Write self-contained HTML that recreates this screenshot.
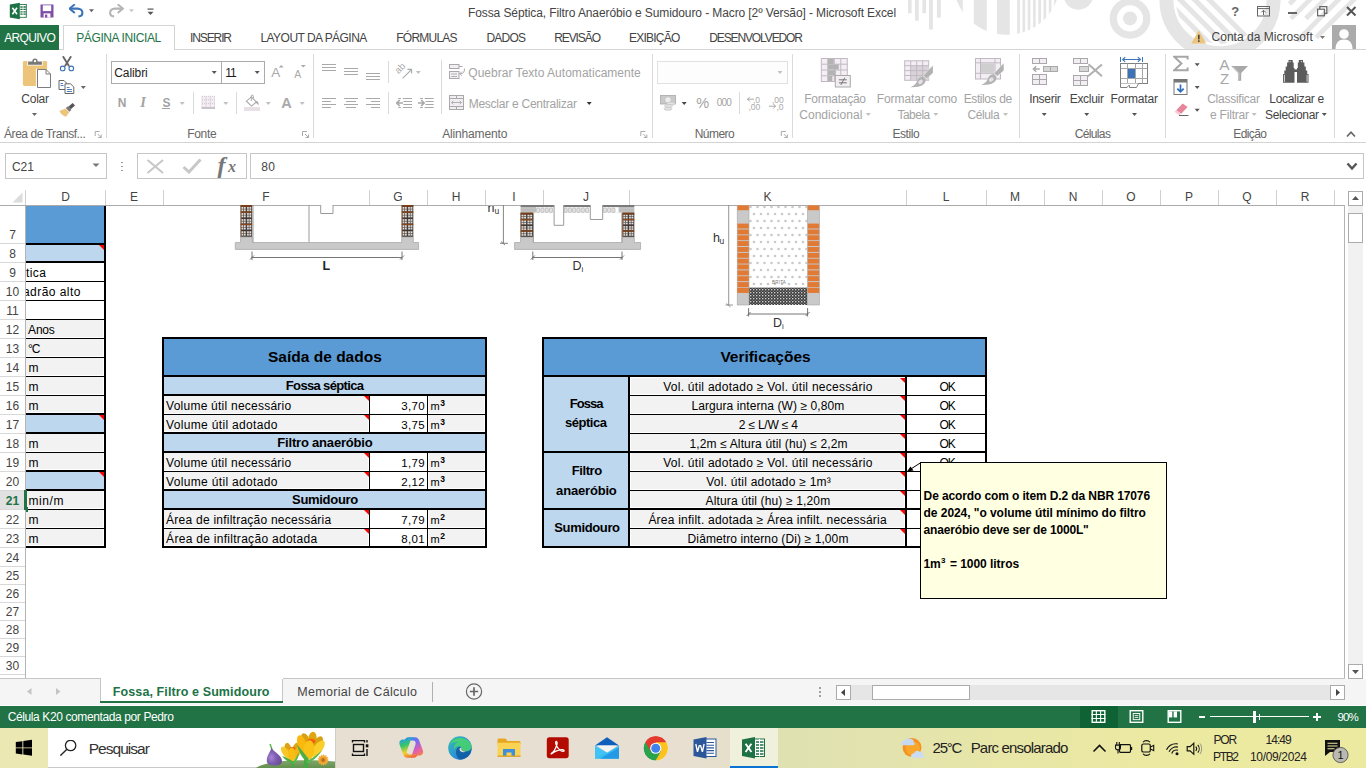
<!DOCTYPE html>
<html><head><meta charset="utf-8"><title>Excel</title><style>
html,body{margin:0;padding:0;background:#fff;}
#r{position:relative;width:1366px;height:768px;overflow:hidden;font-family:"Liberation Sans",sans-serif;background:#fff;}
#r>div,#r>svg,#r>span{position:absolute;}
.t{white-space:pre;line-height:20px;height:20px;}
</style></head><body><div id="r">
<svg style="left:0px;top:0px;" width="1366" height="50">
<g fill="#e5e5e5">
 <rect x="908" y="0" width="3.6" height="13.2"/><rect x="915" y="0" width="3.8" height="20.7"/><rect x="922.4" y="0" width="3.6" height="13.2"/>
 <rect x="929" y="0" width="3.9" height="29.5"/><rect x="936.9" y="0" width="3.9" height="17.6"/>
</g>
<defs>
 <clipPath id="c1"><circle cx="1006.7" cy="-18.7" r="53.5"/></clipPath>
 <clipPath id="c2"><circle cx="1220" cy="-0.4" r="44.3"/></clipPath>
 <clipPath id="c3"><rect x="1283" y="0" width="83" height="49"/></clipPath>
</defs>
<g clip-path="url(#c1)" fill="#e5e5e5">
 <rect x="950" y="0" width="12.8" height="40"/>
 <rect x="973.8" y="0" width="13" height="40"/><rect x="997" y="0" width="12.8" height="40"/>
 <rect x="1017.2" y="0" width="2.7" height="40"/><rect x="1022.5" y="0" width="2.7" height="40"/><rect x="1027.7" y="0" width="2.7" height="40"/><rect x="1033.0" y="0" width="2.7" height="40"/><rect x="1038.3" y="0" width="2.7" height="40"/><rect x="1043.5" y="0" width="2.7" height="40"/><rect x="1048.8" y="0" width="2.7" height="40"/><rect x="1054.1" y="0" width="2.7" height="40"/>
</g>
<circle cx="1078.4" cy="-5.25" r="14.95" fill="#e5e5e5"/>
<circle cx="1130" cy="18.4" r="16.7" fill="none" stroke="#e5e5e5" stroke-width="7.3"/>
<circle cx="1130" cy="18.4" r="7" fill="#e5e5e5"/>
<circle cx="1220" cy="-0.4" r="53.6" fill="none" stroke="#e5e5e5" stroke-width="14"/>
<g clip-path="url(#c2)" stroke="#e5e5e5" stroke-width="5"><line x1="1131.5" y1="-20" x2="1231.5" y2="80"/><line x1="1146" y1="-20" x2="1246" y2="80"/><line x1="1160.5" y1="-20" x2="1260.5" y2="80"/><line x1="1175" y1="-20" x2="1275" y2="80"/><line x1="1189.5" y1="-20" x2="1289.5" y2="80"/></g>
<g stroke="#e5e5e5" stroke-width="4.7"><line x1="1289.5" y1="4" x2="1303.5" y2="-10"/><line x1="1291.0" y1="18.5" x2="1319.5" y2="-10"/><line x1="1305.9" y1="18.5" x2="1334.4" y2="-10"/><line x1="1297.1" y1="41" x2="1348.1" y2="-10"/><line x1="1316.1" y1="37.5" x2="1363.6" y2="-10"/></g>
</svg>
<span class="t" style="left:468px;top:2.84px;font-size:12px;color:#444;letter-spacing:-0.098px;">Fossa Séptica, Filtro Anaeróbio e Sumidouro - Macro [2º Versão] - Microsoft Excel</span>
<div style="left:0px;top:25px;width:59px;height:25px;background:#217346;"></div>
<div style="left:59px;top:49px;width:1307px;height:1px;background:#d4d4d4;"></div>
<div style="left:63px;top:25px;width:112px;height:25px;background:#fff;border:1px solid #d4d4d4;box-sizing:border-box;border-bottom:none;"></div>
<span class="t" style="left:4.2px;top:27.84px;font-size:12px;color:#fff;letter-spacing:-0.621px;">ARQUIVO</span>
<span class="t" style="left:76.2px;top:27.84px;font-size:12px;color:#217346;letter-spacing:-0.381px;">PÁGINA INICIAL</span>
<span class="t" style="left:190.1px;top:27.84px;font-size:12px;color:#444;letter-spacing:-1.127px;">INSERIR</span>
<span class="t" style="left:260.4px;top:27.84px;font-size:12px;color:#444;letter-spacing:-0.534px;">LAYOUT DA PÁGINA</span>
<span class="t" style="left:396.3px;top:27.84px;font-size:12px;color:#444;letter-spacing:-0.773px;">FÓRMULAS</span>
<span class="t" style="left:486.4px;top:27.84px;font-size:12px;color:#444;letter-spacing:-0.738px;">DADOS</span>
<span class="t" style="left:554.2px;top:27.84px;font-size:12px;color:#444;letter-spacing:-1.094px;">REVISÃO</span>
<span class="t" style="left:629px;top:27.84px;font-size:12px;color:#444;letter-spacing:-0.761px;">EXIBIÇÃO</span>
<span class="t" style="left:709.2px;top:27.84px;font-size:12px;color:#444;letter-spacing:-1.111px;">DESENVOLVEDOR</span>
<span class="t" style="left:1211.5px;top:26.84px;font-size:12px;color:#444;letter-spacing:0.032px;">Conta da Microsoft</span>
<div style="left:0px;top:142px;width:1366px;height:1px;background:#d4d4d4;"></div>
<div style="left:106px;top:54px;width:1px;height:84px;background:#dadada;"></div>
<div style="left:313px;top:54px;width:1px;height:84px;background:#dadada;"></div>
<div style="left:652px;top:54px;width:1px;height:84px;background:#dadada;"></div>
<div style="left:792px;top:54px;width:1px;height:84px;background:#dadada;"></div>
<div style="left:1019px;top:54px;width:1px;height:84px;background:#dadada;"></div>
<div style="left:1165px;top:54px;width:1px;height:84px;background:#dadada;"></div>
<div style="left:1334px;top:54px;width:1px;height:84px;background:#dadada;"></div>
<div style="left:193px;top:92px;width:1px;height:22px;background:#dadada;"></div>
<div style="left:236px;top:92px;width:1px;height:22px;background:#dadada;"></div>
<div style="left:388px;top:61px;width:1px;height:22px;background:#dadada;"></div>
<div style="left:388px;top:92px;width:1px;height:22px;background:#dadada;"></div>
<div style="left:441px;top:60px;width:1px;height:54px;background:#dadada;"></div>
<div style="left:739px;top:92px;width:1px;height:22px;background:#dadada;"></div>
<span class="t" style="left:4px;top:123.84px;font-size:12px;color:#666;letter-spacing:-0.436px;">Área de Transf...</span>
<span class="t" style="left:187.3px;top:123.84px;font-size:12px;color:#666;letter-spacing:-0.338px;">Fonte</span>
<span class="t" style="left:442.2px;top:123.84px;font-size:12px;color:#666;letter-spacing:-0.156px;">Alinhamento</span>
<span class="t" style="left:694.7px;top:123.84px;font-size:12px;color:#666;letter-spacing:-0.531px;">Número</span>
<span class="t" style="left:892.5px;top:123.84px;font-size:12px;color:#666;letter-spacing:-0.441px;">Estilo</span>
<span class="t" style="left:1074.7px;top:123.84px;font-size:12px;color:#666;letter-spacing:-0.633px;">Células</span>
<span class="t" style="left:1233.3px;top:123.84px;font-size:12px;color:#666;letter-spacing:-0.617px;">Edição</span>
<span class="t" style="left:21.3px;top:88.84px;font-size:12px;color:#444;letter-spacing:-0.238px;">Colar</span>
<div style="left:111px;top:61px;width:111px;height:23px;background:#fff;border:1px solid #ababab;box-sizing:border-box;"></div>
<div style="left:221px;top:61px;width:44px;height:23px;background:#fff;border:1px solid #ababab;box-sizing:border-box;"></div>
<span class="t" style="left:114.3px;top:62.84px;font-size:12px;color:#1e1e1e;letter-spacing:-0.088px;">Calibri</span>
<span class="t" style="left:225.3px;top:62.84px;font-size:12px;color:#1e1e1e;letter-spacing:-0.984px;">11</span>
<span class="t" style="left:117.7px;top:92.84px;font-size:12px;color:#a3a3a3;font-weight:bold;letter-spacing:-0.172px;">N</span>
<span class="t" style="left:140.2px;top:91.98px;font-size:14.5px;color:#a3a3a3;font-weight:bold;font-style:italic;font-family:'Liberation Serif',serif;letter-spacing:1.144px;">I</span>
<span class="t" style="left:162.4px;top:92.84px;font-size:12px;color:#a3a3a3;font-weight:bold;letter-spacing:-0.616px;">S</span>
<div style="left:162px;top:108px;width:8px;height:1px;background:#a3a3a3;"></div>
<span class="t" style="left:468.3px;top:62.84px;font-size:12px;color:#a3a3a3;letter-spacing:0.022px;">Quebrar Texto Automaticamente</span>
<span class="t" style="left:468.7px;top:93.84px;font-size:12px;color:#a3a3a3;letter-spacing:-0.256px;">Mesclar e Centralizar</span>
<div style="left:657px;top:61px;width:131px;height:23px;background:#fdfdfd;border:1px solid #e1e1e1;box-sizing:border-box;"></div>
<span class="t" style="left:696.3px;top:93.28px;font-size:14.5px;color:#a3a3a3;letter-spacing:-0.506px;">%</span>
<span class="t" style="left:716.7px;top:92.53px;font-size:10px;color:#a3a3a3;letter-spacing:-0.729px;">000</span>
<span class="t" style="left:804.2px;top:88.84px;font-size:12px;color:#a3a3a3;letter-spacing:-0.243px;">Formatação</span>
<span class="t" style="left:799.2px;top:104.84px;font-size:12px;color:#a3a3a3;letter-spacing:0.053px;">Condicional</span>
<span class="t" style="left:876.7px;top:88.84px;font-size:12px;color:#a3a3a3;letter-spacing:-0.066px;">Formatar como</span>
<span class="t" style="left:897.5px;top:104.84px;font-size:12px;color:#a3a3a3;letter-spacing:-0.529px;">Tabela</span>
<span class="t" style="left:963.7px;top:88.84px;font-size:12px;color:#a3a3a3;letter-spacing:-0.403px;">Estilos de</span>
<span class="t" style="left:967.5px;top:104.84px;font-size:12px;color:#a3a3a3;letter-spacing:-0.389px;">Célula</span>
<span class="t" style="left:1029.2px;top:88.84px;font-size:12px;color:#444;letter-spacing:-0.292px;">Inserir</span>
<span class="t" style="left:1069.7px;top:88.84px;font-size:12px;color:#444;letter-spacing:-0.288px;">Excluir</span>
<span class="t" style="left:1110.5px;top:88.84px;font-size:12px;color:#444;letter-spacing:-0.173px;">Formatar</span>
<span class="t" style="left:1207.2px;top:88.84px;font-size:12px;color:#a3a3a3;letter-spacing:-0.259px;">Classificar</span>
<span class="t" style="left:1210px;top:104.84px;font-size:12px;color:#a3a3a3;letter-spacing:-0.208px;">e Filtrar</span>
<span class="t" style="left:1269.3px;top:88.84px;font-size:12px;color:#444;letter-spacing:-0.321px;">Localizar e</span>
<span class="t" style="left:1265px;top:104.84px;font-size:12px;color:#444;letter-spacing:-0.290px;">Selecionar</span>
<svg style="left:32px;top:113px;" width="5" height="3"><path d="M0 0H5L2.5 3Z" fill="#666"/></svg>
<svg style="left:80px;top:86px;" width="6" height="3"><g transform="translate(0.8 0)"><path d="M0 0H5L2.5 3Z" fill="#666"/></g></svg>
<svg style="left:211px;top:71px;" width="6" height="3"><g transform="translate(0.7 0)"><path d="M0 0H5L2.5 3Z" fill="#555"/></g></svg>
<svg style="left:254px;top:71px;" width="6" height="3"><g transform="translate(0.7 0)"><path d="M0 0H5L2.5 3Z" fill="#555"/></g></svg>
<svg style="left:179px;top:102px;" width="6" height="3"><g transform="translate(0.7 0)"><path d="M0 0H5L2.5 3Z" fill="#c0c0c0"/></g></svg>
<svg style="left:223px;top:102px;" width="6" height="3"><g transform="translate(0.3 0)"><path d="M0 0H5L2.5 3Z" fill="#c0c0c0"/></g></svg>
<svg style="left:265px;top:102px;" width="6" height="3"><g transform="translate(0.8 0)"><path d="M0 0H5L2.5 3Z" fill="#c0c0c0"/></g></svg>
<svg style="left:299px;top:102px;" width="6" height="3"><g transform="translate(0.7 0)"><path d="M0 0H5L2.5 3Z" fill="#c0c0c0"/></g></svg>
<svg style="left:415px;top:71px;" width="6" height="3"><g transform="translate(0.8 0)"><path d="M0 0H5L2.5 3Z" fill="#c0c0c0"/></g></svg>
<svg style="left:586px;top:102px;" width="6" height="3"><g transform="translate(0.7 0)"><path d="M0 0H5L2.5 3Z" fill="#333"/></g></svg>
<svg style="left:777px;top:71px;" width="6" height="3"><g transform="translate(0.5 0)"><path d="M0 0H5L2.5 3Z" fill="#c0c0c0"/></g></svg>
<svg style="left:681px;top:102px;" width="6" height="3"><g transform="translate(0.7 0)"><path d="M0 0H5L2.5 3Z" fill="#444"/></g></svg>
<svg style="left:865px;top:113px;" width="6" height="3"><g transform="translate(0.8 0)"><path d="M0 0H5L2.5 3Z" fill="#c0c0c0"/></g></svg>
<svg style="left:933px;top:113px;" width="6" height="3"><g transform="translate(0.3 0)"><path d="M0 0H5L2.5 3Z" fill="#c0c0c0"/></g></svg>
<svg style="left:1003px;top:113px;" width="5" height="3"><path d="M0 0H5L2.5 3Z" fill="#c0c0c0"/></svg>
<svg style="left:1041px;top:113px;" width="6" height="3"><g transform="translate(0.7 0)"><path d="M0 0H5L2.5 3Z" fill="#555"/></g></svg>
<svg style="left:1084px;top:113px;" width="6" height="3"><g transform="translate(0.2 0)"><path d="M0 0H5L2.5 3Z" fill="#555"/></g></svg>
<svg style="left:1132px;top:113px;" width="5" height="3"><path d="M0 0H5L2.5 3Z" fill="#555"/></svg>
<svg style="left:1194px;top:63px;" width="6" height="4"><g transform="translate(0.7 0.3)"><path d="M0 0H5L2.5 3Z" fill="#555"/></g></svg>
<svg style="left:1194px;top:86px;" width="6" height="3"><g transform="translate(0.7 0)"><path d="M0 0H5L2.5 3Z" fill="#555"/></g></svg>
<svg style="left:1194px;top:108px;" width="6" height="4"><g transform="translate(0.7 0.8)"><path d="M0 0H5L2.5 3Z" fill="#555"/></g></svg>
<svg style="left:1251px;top:113px;" width="6" height="3"><g transform="translate(0.7 0)"><path d="M0 0H5L2.5 3Z" fill="#c0c0c0"/></g></svg>
<svg style="left:1321px;top:113px;" width="6" height="3"><g transform="translate(0.8 0)"><path d="M0 0H5L2.5 3Z" fill="#555"/></g></svg>
<svg style="left:1320px;top:36px;" width="5" height="3"><path d="M0 0H5L2.5 3Z" fill="#777"/></svg>
<svg style="left:94px;top:131px;" width="8" height="7"><g transform="translate(0.7 0)"><path d="M0.5 5V0.5H5" fill="none" stroke="#aaa"/><path d="M3 3L6.5 6.5M6.5 3.5V6.5H3.5" fill="none" stroke="#aaa"/></g></svg>
<svg style="left:302px;top:131px;" width="7" height="7"><path d="M0.5 5V0.5H5" fill="none" stroke="#aaa"/><path d="M3 3L6.5 6.5M6.5 3.5V6.5H3.5" fill="none" stroke="#aaa"/></svg>
<svg style="left:640px;top:131px;" width="8" height="7"><g transform="translate(0.3 0)"><path d="M0.5 5V0.5H5" fill="none" stroke="#aaa"/><path d="M3 3L6.5 6.5M6.5 3.5V6.5H3.5" fill="none" stroke="#aaa"/></g></svg>
<svg style="left:780px;top:131px;" width="8" height="7"><g transform="translate(0.8 0)"><path d="M0.5 5V0.5H5" fill="none" stroke="#aaa"/><path d="M3 3L6.5 6.5M6.5 3.5V6.5H3.5" fill="none" stroke="#aaa"/></g></svg>
<svg style="left:1346px;top:130px;" width="10" height="8"><path d="M1 6.5L5 2.2L9 6.5" fill="none" stroke="#666" stroke-width="1.7"/></svg>
<div style="left:5px;top:153px;width:102px;height:26px;background:#fff;border:1px solid #c6c6c6;box-sizing:border-box;"></div>
<span class="t" style="left:12px;top:156.54px;font-size:12px;color:#444;letter-spacing:-0.105px;">C21</span>
<svg style="left:92px;top:163px;" width="8" height="4"><g transform="translate(0.5 0.5)"><path d="M0 0H7L3.5 3.5Z" fill="#777"/></g></svg>
<div style="left:121px;top:161.5px;width:1.5px;height:1.5px;background:#999;"></div>
<div style="left:121px;top:165.5px;width:1.5px;height:1.5px;background:#999;"></div>
<div style="left:121px;top:169.5px;width:1.5px;height:1.5px;background:#999;"></div>
<div style="left:137px;top:153px;width:109.5px;height:26px;background:#fff;border:1px solid #c6c6c6;box-sizing:border-box;"></div>
<svg style="left:146px;top:158px;" width="19" height="17"><g transform="translate(0 0.5)"><path d="M1.5 1.5L17 14.5M17 1.5L1.5 14.5" stroke="#c8c8c8" stroke-width="2.2" fill="none"/></g></svg>
<svg style="left:182px;top:158px;" width="20" height="16"><path d="M1.5 9L7 14L18.5 1.5" stroke="#c8c8c8" stroke-width="3" fill="none"/></svg>
<span class="t" style="left:217.5px;top:155.18px;font-size:24px;color:#777;font-weight:bold;font-style:italic;font-family:'Liberation Serif',serif;">f</span>
<span class="t" style="left:228px;top:157.46px;font-size:16px;color:#777;font-weight:bold;font-style:italic;font-family:'Liberation Serif',serif;">x</span>
<div style="left:250px;top:153px;width:1114px;height:26px;background:#fff;border:1px solid #c6c6c6;box-sizing:border-box;"></div>
<span class="t" style="left:261.2px;top:156.54px;font-size:12px;color:#444;letter-spacing:0.470px;">80</span>
<svg style="left:1346px;top:162px;" width="12" height="9"><path d="M1.5 1.5L6 6.5L10.5 1.5" fill="none" stroke="#555" stroke-width="2.4"/></svg>
<div style="left:0px;top:205px;width:1345px;height:1px;background:#ababab;"></div>
<div style="left:25px;top:190px;width:1px;height:15px;background:#d0d0d0;"></div>
<span class="t" style="left:61.16px;top:186.54px;font-size:12px;color:#444;">D</span>
<div style="left:105px;top:190px;width:1px;height:15px;background:#d0d0d0;"></div>
<span class="t" style="left:129.99px;top:186.54px;font-size:12px;color:#444;">E</span>
<div style="left:163px;top:190px;width:1px;height:15px;background:#d0d0d0;"></div>
<span class="t" style="left:262.33px;top:186.54px;font-size:12px;color:#444;">F</span>
<div style="left:369px;top:190px;width:1px;height:15px;background:#d0d0d0;"></div>
<span class="t" style="left:393.33px;top:186.54px;font-size:12px;color:#444;">G</span>
<div style="left:427px;top:190px;width:1px;height:15px;background:#d0d0d0;"></div>
<span class="t" style="left:451.66px;top:186.54px;font-size:12px;color:#444;">H</span>
<div style="left:485px;top:190px;width:1px;height:15px;background:#d0d0d0;"></div>
<span class="t" style="left:512.33px;top:186.54px;font-size:12px;color:#444;">I</span>
<div style="left:543px;top:190px;width:1px;height:15px;background:#d0d0d0;"></div>
<span class="t" style="left:583.0px;top:186.54px;font-size:12px;color:#444;">J</span>
<div style="left:629px;top:190px;width:1px;height:15px;background:#d0d0d0;"></div>
<span class="t" style="left:763.49px;top:186.54px;font-size:12px;color:#444;">K</span>
<div style="left:906px;top:190px;width:1px;height:15px;background:#d0d0d0;"></div>
<span class="t" style="left:942.66px;top:186.54px;font-size:12px;color:#444;">L</span>
<div style="left:986px;top:190px;width:1px;height:15px;background:#d0d0d0;"></div>
<span class="t" style="left:1010.0px;top:186.54px;font-size:12px;color:#444;">M</span>
<div style="left:1044px;top:190px;width:1px;height:15px;background:#d0d0d0;"></div>
<span class="t" style="left:1068.66px;top:186.54px;font-size:12px;color:#444;">N</span>
<div style="left:1102px;top:190px;width:1px;height:15px;background:#d0d0d0;"></div>
<span class="t" style="left:1126.33px;top:186.54px;font-size:12px;color:#444;">O</span>
<div style="left:1160px;top:190px;width:1px;height:15px;background:#d0d0d0;"></div>
<span class="t" style="left:1184.99px;top:186.54px;font-size:12px;color:#444;">P</span>
<div style="left:1218px;top:190px;width:1px;height:15px;background:#d0d0d0;"></div>
<span class="t" style="left:1242.33px;top:186.54px;font-size:12px;color:#444;">Q</span>
<div style="left:1276px;top:190px;width:1px;height:15px;background:#d0d0d0;"></div>
<span class="t" style="left:1300.66px;top:186.54px;font-size:12px;color:#444;">R</span>
<div style="left:1334px;top:190px;width:1px;height:15px;background:#d0d0d0;"></div>
<svg style="left:12px;top:192px;" width="11" height="11"><path d="M10.5 0.5V10.5H0.5Z" fill="#dcdcdc"/></svg>
<div style="left:25px;top:206px;width:1px;height:472px;background:#b4b4b4;"></div>
<div style="left:0px;top:490px;width:25px;height:19px;background:#e1e1e1;"></div>
<div style="left:24px;top:490px;width:2px;height:19px;background:#217346;"></div>
<div style="left:0px;top:243px;width:25px;height:1px;background:#d8d8d8;"></div>
<span class="t" style="left:9.16px;top:224.84px;font-size:12px;color:#444;">7</span>
<div style="left:0px;top:262px;width:25px;height:1px;background:#d8d8d8;"></div>
<span class="t" style="left:9.16px;top:243.84px;font-size:12px;color:#444;">8</span>
<div style="left:0px;top:281px;width:25px;height:1px;background:#d8d8d8;"></div>
<span class="t" style="left:9.16px;top:262.84px;font-size:12px;color:#444;">9</span>
<div style="left:0px;top:300px;width:25px;height:1px;background:#d8d8d8;"></div>
<span class="t" style="left:5.82px;top:281.84px;font-size:12px;color:#444;">10</span>
<div style="left:0px;top:319px;width:25px;height:1px;background:#d8d8d8;"></div>
<span class="t" style="left:6.27px;top:300.84px;font-size:12px;color:#444;">11</span>
<div style="left:0px;top:338px;width:25px;height:1px;background:#d8d8d8;"></div>
<span class="t" style="left:5.82px;top:319.84px;font-size:12px;color:#444;">12</span>
<div style="left:0px;top:357px;width:25px;height:1px;background:#d8d8d8;"></div>
<span class="t" style="left:5.82px;top:338.84px;font-size:12px;color:#444;">13</span>
<div style="left:0px;top:376px;width:25px;height:1px;background:#d8d8d8;"></div>
<span class="t" style="left:5.82px;top:357.84px;font-size:12px;color:#444;">14</span>
<div style="left:0px;top:395px;width:25px;height:1px;background:#d8d8d8;"></div>
<span class="t" style="left:5.82px;top:376.84px;font-size:12px;color:#444;">15</span>
<div style="left:0px;top:414px;width:25px;height:1px;background:#d8d8d8;"></div>
<span class="t" style="left:5.82px;top:395.84px;font-size:12px;color:#444;">16</span>
<div style="left:0px;top:433px;width:25px;height:1px;background:#d8d8d8;"></div>
<span class="t" style="left:5.82px;top:414.84px;font-size:12px;color:#444;">17</span>
<div style="left:0px;top:452px;width:25px;height:1px;background:#d8d8d8;"></div>
<span class="t" style="left:5.82px;top:433.84px;font-size:12px;color:#444;">18</span>
<div style="left:0px;top:471px;width:25px;height:1px;background:#d8d8d8;"></div>
<span class="t" style="left:5.82px;top:452.84px;font-size:12px;color:#444;">19</span>
<div style="left:0px;top:490px;width:25px;height:1px;background:#d8d8d8;"></div>
<span class="t" style="left:5.82px;top:471.84px;font-size:12px;color:#444;">20</span>
<div style="left:0px;top:509px;width:25px;height:1px;background:#d8d8d8;"></div>
<span class="t" style="left:5.82px;top:490.84px;font-size:12px;color:#217346;font-weight:bold;">21</span>
<div style="left:0px;top:528px;width:25px;height:1px;background:#d8d8d8;"></div>
<span class="t" style="left:5.82px;top:509.84px;font-size:12px;color:#444;">22</span>
<div style="left:0px;top:547px;width:25px;height:1px;background:#d8d8d8;"></div>
<span class="t" style="left:5.82px;top:528.84px;font-size:12px;color:#444;">23</span>
<div style="left:0px;top:566px;width:25px;height:1px;background:#d8d8d8;"></div>
<span class="t" style="left:5.82px;top:547.84px;font-size:12px;color:#444;">24</span>
<div style="left:0px;top:584px;width:25px;height:1px;background:#d8d8d8;"></div>
<span class="t" style="left:5.82px;top:565.84px;font-size:12px;color:#444;">25</span>
<div style="left:0px;top:602px;width:25px;height:1px;background:#d8d8d8;"></div>
<span class="t" style="left:5.82px;top:583.84px;font-size:12px;color:#444;">26</span>
<div style="left:0px;top:620px;width:25px;height:1px;background:#d8d8d8;"></div>
<span class="t" style="left:5.82px;top:601.84px;font-size:12px;color:#444;">27</span>
<div style="left:0px;top:638px;width:25px;height:1px;background:#d8d8d8;"></div>
<span class="t" style="left:5.82px;top:619.84px;font-size:12px;color:#444;">28</span>
<div style="left:0px;top:656px;width:25px;height:1px;background:#d8d8d8;"></div>
<span class="t" style="left:5.82px;top:637.84px;font-size:12px;color:#444;">29</span>
<div style="left:0px;top:674px;width:25px;height:1px;background:#d8d8d8;"></div>
<span class="t" style="left:5.82px;top:655.84px;font-size:12px;color:#444;">30</span>
<div style="left:26px;top:206px;width:79px;height:38px;background:#5B9BD5;"></div>
<div style="left:26px;top:245px;width:79px;height:17px;background:#BDD7EE;"></div>
<div style="left:26px;top:320px;width:77px;height:17px;background:#F2F2F2;"></div>
<div style="left:26px;top:339px;width:77px;height:17px;background:#F2F2F2;"></div>
<div style="left:26px;top:358px;width:77px;height:17px;background:#F2F2F2;"></div>
<div style="left:26px;top:377px;width:77px;height:17px;background:#F2F2F2;"></div>
<div style="left:26px;top:396px;width:77px;height:16px;background:#F2F2F2;"></div>
<div style="left:26px;top:434px;width:77px;height:17px;background:#F2F2F2;"></div>
<div style="left:26px;top:453px;width:77px;height:16px;background:#F2F2F2;"></div>
<div style="left:26px;top:491px;width:77px;height:17px;background:#F2F2F2;"></div>
<div style="left:26px;top:510px;width:77px;height:17px;background:#F2F2F2;"></div>
<div style="left:26px;top:529px;width:77px;height:16px;background:#F2F2F2;"></div>
<div style="left:26px;top:415px;width:78px;height:17px;background:#BDD7EE;"></div>
<div style="left:26px;top:472px;width:78px;height:17px;background:#BDD7EE;"></div>
<div style="left:104px;top:206px;width:2px;height:342px;background:#000;"></div>
<div style="left:26px;top:243px;width:79px;height:2px;background:#000;"></div>
<div style="left:26px;top:261px;width:79px;height:2px;background:#000;"></div>
<div style="left:26px;top:413px;width:79px;height:2px;background:#000;"></div>
<div style="left:26px;top:432px;width:79px;height:2px;background:#000;"></div>
<div style="left:26px;top:470px;width:79px;height:2px;background:#000;"></div>
<div style="left:26px;top:489px;width:79px;height:2px;background:#000;"></div>
<div style="left:26px;top:546px;width:79px;height:2px;background:#000;"></div>
<div style="left:26px;top:281px;width:79px;height:1px;background:#000;"></div>
<div style="left:26px;top:300px;width:79px;height:1px;background:#000;"></div>
<div style="left:26px;top:319px;width:79px;height:1px;background:#000;"></div>
<div style="left:26px;top:338px;width:79px;height:1px;background:#000;"></div>
<div style="left:26px;top:357px;width:79px;height:1px;background:#000;"></div>
<div style="left:26px;top:376px;width:79px;height:1px;background:#000;"></div>
<div style="left:26px;top:395px;width:79px;height:1px;background:#000;"></div>
<div style="left:26px;top:452px;width:79px;height:1px;background:#000;"></div>
<div style="left:26px;top:509px;width:79px;height:1px;background:#000;"></div>
<div style="left:26px;top:528px;width:79px;height:1px;background:#000;"></div>
<svg style="left:99px;top:245px;" width="5" height="5"><path d="M0 0H5V5Z" fill="#ff0000"/></svg>
<svg style="left:99px;top:415px;" width="5" height="5"><path d="M0 0H5V5Z" fill="#ff0000"/></svg>
<svg style="left:99px;top:472px;" width="5" height="5"><path d="M0 0H5V5Z" fill="#ff0000"/></svg>
<span class="t" style="left:26px;top:262.84px;font-size:12px;color:#000;letter-spacing:0.378px;">tica</span>
<span class="t" style="left:28.1px;top:319.84px;font-size:12px;color:#000;letter-spacing:-0.215px;">Anos</span>
<span class="t" style="left:28.1px;top:338.84px;font-size:12px;color:#000;letter-spacing:-1.184px;">°C</span>
<span class="t" style="left:28.5px;top:357.84px;font-size:12px;color:#000;letter-spacing:-1.000px;">m</span>
<span class="t" style="left:28.5px;top:376.84px;font-size:12px;color:#000;letter-spacing:-1.000px;">m</span>
<span class="t" style="left:28.5px;top:395.84px;font-size:12px;color:#000;letter-spacing:-1.000px;">m</span>
<span class="t" style="left:28.5px;top:433.84px;font-size:12px;color:#000;letter-spacing:-1.000px;">m</span>
<span class="t" style="left:28.5px;top:452.84px;font-size:12px;color:#000;letter-spacing:-1.000px;">m</span>
<span class="t" style="left:28.5px;top:490.84px;font-size:12px;color:#000;letter-spacing:0.566px;">min/m</span>
<span class="t" style="left:28.5px;top:509.84px;font-size:12px;color:#000;letter-spacing:-1.000px;">m</span>
<span class="t" style="left:28.5px;top:528.84px;font-size:12px;color:#000;letter-spacing:-1.000px;">m</span>
<div style="left:26px;top:282px;width:78px;height:18px;overflow:hidden;"><span style="position:absolute;left:-3px;font-size:12px;line-height:20px;top:-0.2px;color:#000;white-space:pre;letter-spacing:0.45px;">adrão alto</span></div>
<div style="left:24px;top:490px;width:3px;height:20px;background:#217346;"></div>
<div style="left:26px;top:507px;width:2px;height:5px;background:#217346;"></div>
<div style="left:163px;top:339px;width:323px;height:37px;background:#5B9BD5;"></div>
<div style="left:163px;top:377px;width:323px;height:18px;background:#BDD7EE;"></div>
<div style="left:163px;top:434px;width:323px;height:18px;background:#BDD7EE;"></div>
<div style="left:163px;top:491px;width:323px;height:18px;background:#BDD7EE;"></div>
<div style="left:163px;top:396px;width:323px;height:18px;background:#fff;"></div>
<div style="left:164px;top:396px;width:204px;height:17px;background:#F2F2F2;"></div>
<div style="left:429px;top:396px;width:55px;height:17px;background:#F2F2F2;"></div>
<div style="left:369px;top:396px;width:1px;height:18px;background:#000;"></div>
<div style="left:427px;top:396px;width:1px;height:18px;background:#000;"></div>
<svg style="left:364px;top:396px;" width="5" height="5"><path d="M0 0H5V5Z" fill="#ff0000"/></svg>
<div style="left:163px;top:415px;width:323px;height:18px;background:#fff;"></div>
<div style="left:164px;top:415px;width:204px;height:16px;background:#F2F2F2;"></div>
<div style="left:429px;top:415px;width:55px;height:16px;background:#F2F2F2;"></div>
<div style="left:369px;top:415px;width:1px;height:18px;background:#000;"></div>
<div style="left:427px;top:415px;width:1px;height:18px;background:#000;"></div>
<svg style="left:364px;top:415px;" width="5" height="5"><path d="M0 0H5V5Z" fill="#ff0000"/></svg>
<div style="left:163px;top:453px;width:323px;height:18px;background:#fff;"></div>
<div style="left:164px;top:453px;width:204px;height:17px;background:#F2F2F2;"></div>
<div style="left:429px;top:453px;width:55px;height:17px;background:#F2F2F2;"></div>
<div style="left:369px;top:453px;width:1px;height:18px;background:#000;"></div>
<div style="left:427px;top:453px;width:1px;height:18px;background:#000;"></div>
<svg style="left:364px;top:453px;" width="5" height="5"><path d="M0 0H5V5Z" fill="#ff0000"/></svg>
<div style="left:163px;top:472px;width:323px;height:18px;background:#fff;"></div>
<div style="left:164px;top:472px;width:204px;height:16px;background:#F2F2F2;"></div>
<div style="left:429px;top:472px;width:55px;height:16px;background:#F2F2F2;"></div>
<div style="left:369px;top:472px;width:1px;height:18px;background:#000;"></div>
<div style="left:427px;top:472px;width:1px;height:18px;background:#000;"></div>
<svg style="left:364px;top:472px;" width="5" height="5"><path d="M0 0H5V5Z" fill="#ff0000"/></svg>
<div style="left:163px;top:510px;width:323px;height:18px;background:#fff;"></div>
<div style="left:164px;top:510px;width:204px;height:17px;background:#F2F2F2;"></div>
<div style="left:429px;top:510px;width:55px;height:17px;background:#F2F2F2;"></div>
<div style="left:369px;top:510px;width:1px;height:18px;background:#000;"></div>
<div style="left:427px;top:510px;width:1px;height:18px;background:#000;"></div>
<svg style="left:364px;top:510px;" width="5" height="5"><path d="M0 0H5V5Z" fill="#ff0000"/></svg>
<div style="left:163px;top:529px;width:323px;height:18px;background:#fff;"></div>
<div style="left:164px;top:529px;width:204px;height:16px;background:#F2F2F2;"></div>
<div style="left:429px;top:529px;width:55px;height:16px;background:#F2F2F2;"></div>
<div style="left:369px;top:529px;width:1px;height:18px;background:#000;"></div>
<div style="left:427px;top:529px;width:1px;height:18px;background:#000;"></div>
<svg style="left:364px;top:529px;" width="5" height="5"><path d="M0 0H5V5Z" fill="#ff0000"/></svg>
<div style="left:162px;top:337px;width:325px;height:211px;background:transparent;border:2px solid #000;box-sizing:border-box;"></div>
<div style="left:163px;top:375px;width:323px;height:2px;background:#000;"></div>
<div style="left:163px;top:394px;width:323px;height:2px;background:#000;"></div>
<div style="left:163px;top:432px;width:323px;height:2px;background:#000;"></div>
<div style="left:163px;top:451px;width:323px;height:2px;background:#000;"></div>
<div style="left:163px;top:489px;width:323px;height:2px;background:#000;"></div>
<div style="left:163px;top:508px;width:323px;height:2px;background:#000;"></div>
<div style="left:163px;top:414px;width:323px;height:1px;background:#000;"></div>
<div style="left:163px;top:471px;width:323px;height:1px;background:#000;"></div>
<div style="left:163px;top:528px;width:323px;height:1px;background:#000;"></div>
<span class="t" style="left:267.9px;top:347.43px;font-size:15.5px;color:#000;font-weight:bold;letter-spacing:0.021px;">Saída de dados</span>
<span class="t" style="left:285.8px;top:376.00px;font-size:13px;color:#000;font-weight:bold;letter-spacing:-0.646px;">Fossa séptica</span>
<span class="t" style="left:277.3px;top:433.00px;font-size:13px;color:#000;font-weight:bold;letter-spacing:-0.190px;">Filtro anaeróbio</span>
<span class="t" style="left:292px;top:490.00px;font-size:13px;color:#000;font-weight:bold;letter-spacing:-0.290px;">Sumidouro</span>
<span class="t" style="left:166.1px;top:395.84px;font-size:12px;color:#000;letter-spacing:0.237px;">Volume útil necessário</span>
<span class="t" style="left:166.1px;top:414.84px;font-size:12px;color:#000;letter-spacing:0.325px;">Volume útil adotado</span>
<span class="t" style="left:166.1px;top:452.84px;font-size:12px;color:#000;letter-spacing:0.237px;">Volume útil necessário</span>
<span class="t" style="left:166.1px;top:471.84px;font-size:12px;color:#000;letter-spacing:0.325px;">Volume útil adotado</span>
<span class="t" style="left:166.1px;top:509.84px;font-size:12px;color:#000;letter-spacing:0.240px;">Área de infiltração necessária</span>
<span class="t" style="left:166.1px;top:528.84px;font-size:12px;color:#000;letter-spacing:0.291px;">Área de infiltração adotada</span>
<span class="t" style="left:401.3px;top:396.02px;font-size:11.5px;color:#000;letter-spacing:0.327px;">3,70</span>
<span class="t" style="left:401.3px;top:415.02px;font-size:11.5px;color:#000;letter-spacing:0.327px;">3,75</span>
<span class="t" style="left:401.3px;top:453.02px;font-size:11.5px;color:#000;letter-spacing:0.327px;">1,79</span>
<span class="t" style="left:401.3px;top:472.02px;font-size:11.5px;color:#000;letter-spacing:0.327px;">2,12</span>
<span class="t" style="left:401.3px;top:510.02px;font-size:11.5px;color:#000;letter-spacing:0.327px;">7,79</span>
<span class="t" style="left:401.3px;top:529.02px;font-size:11.5px;color:#000;letter-spacing:0.327px;">8,01</span>
<span class="t" style="left:430.5px;top:396.19px;font-size:11px;color:#000;">m</span>
<span class="t" style="left:440.2px;top:393.05px;font-size:8.5px;color:#000;font-weight:bold;">3</span>
<span class="t" style="left:430.5px;top:415.19px;font-size:11px;color:#000;">m</span>
<span class="t" style="left:440.2px;top:412.05px;font-size:8.5px;color:#000;font-weight:bold;">3</span>
<span class="t" style="left:430.5px;top:453.19px;font-size:11px;color:#000;">m</span>
<span class="t" style="left:440.2px;top:450.05px;font-size:8.5px;color:#000;font-weight:bold;">3</span>
<span class="t" style="left:430.5px;top:472.19px;font-size:11px;color:#000;">m</span>
<span class="t" style="left:440.2px;top:469.05px;font-size:8.5px;color:#000;font-weight:bold;">3</span>
<span class="t" style="left:430.5px;top:510.19px;font-size:11px;color:#000;">m</span>
<span class="t" style="left:440.2px;top:507.05px;font-size:8.5px;color:#000;font-weight:bold;">2</span>
<span class="t" style="left:430.5px;top:529.19px;font-size:11px;color:#000;">m</span>
<span class="t" style="left:440.2px;top:526.05px;font-size:8.5px;color:#000;font-weight:bold;">2</span>
<div style="left:543px;top:339px;width:443px;height:37px;background:#5B9BD5;"></div>
<div style="left:543px;top:377px;width:86px;height:170px;background:#BDD7EE;"></div>
<div style="left:630px;top:377px;width:356px;height:170px;background:#fff;"></div>
<div style="left:631px;top:378px;width:273px;height:16px;background:#F2F2F2;"></div>
<svg style="left:900px;top:378px;" width="5" height="5"><path d="M0 0H5V5Z" fill="#ff0000"/></svg>
<div style="left:631px;top:396px;width:273px;height:17px;background:#F2F2F2;"></div>
<svg style="left:900px;top:396px;" width="5" height="5"><path d="M0 0H5V5Z" fill="#ff0000"/></svg>
<div style="left:631px;top:415px;width:273px;height:17px;background:#F2F2F2;"></div>
<svg style="left:900px;top:415px;" width="5" height="5"><path d="M0 0H5V5Z" fill="#ff0000"/></svg>
<div style="left:631px;top:434px;width:273px;height:16px;background:#F2F2F2;"></div>
<svg style="left:900px;top:434px;" width="5" height="5"><path d="M0 0H5V5Z" fill="#ff0000"/></svg>
<div style="left:631px;top:453px;width:273px;height:17px;background:#F2F2F2;"></div>
<svg style="left:900px;top:453px;" width="5" height="5"><path d="M0 0H5V5Z" fill="#ff0000"/></svg>
<div style="left:631px;top:472px;width:273px;height:17px;background:#F2F2F2;"></div>
<svg style="left:900px;top:472px;" width="5" height="5"><path d="M0 0H5V5Z" fill="#ff0000"/></svg>
<div style="left:631px;top:491px;width:273px;height:16px;background:#F2F2F2;"></div>
<svg style="left:900px;top:491px;" width="5" height="5"><path d="M0 0H5V5Z" fill="#ff0000"/></svg>
<div style="left:631px;top:510px;width:273px;height:17px;background:#F2F2F2;"></div>
<svg style="left:900px;top:510px;" width="5" height="5"><path d="M0 0H5V5Z" fill="#ff0000"/></svg>
<div style="left:631px;top:529px;width:273px;height:16px;background:#F2F2F2;"></div>
<svg style="left:900px;top:529px;" width="5" height="5"><path d="M0 0H5V5Z" fill="#ff0000"/></svg>
<div style="left:542px;top:337px;width:445px;height:211px;background:transparent;border:2px solid #000;box-sizing:border-box;"></div>
<div style="left:628px;top:376px;width:2px;height:171px;background:#000;"></div>
<div style="left:905px;top:376px;width:2px;height:171px;background:#000;"></div>
<div style="left:543px;top:375px;width:443px;height:2px;background:#000;"></div>
<div style="left:543px;top:451px;width:443px;height:2px;background:#000;"></div>
<div style="left:543px;top:508px;width:443px;height:2px;background:#000;"></div>
<div style="left:630px;top:395px;width:356px;height:1px;background:#000;"></div>
<div style="left:630px;top:414px;width:356px;height:1px;background:#000;"></div>
<div style="left:630px;top:433px;width:356px;height:1px;background:#000;"></div>
<div style="left:630px;top:471px;width:356px;height:1px;background:#000;"></div>
<div style="left:630px;top:490px;width:356px;height:1px;background:#000;"></div>
<div style="left:630px;top:528px;width:356px;height:1px;background:#000;"></div>
<span class="t" style="left:720.4px;top:347.43px;font-size:15.5px;color:#000;font-weight:bold;letter-spacing:-0.024px;">Verificações</span>
<span class="t" style="left:569.7px;top:394.40px;font-size:13px;color:#000;font-weight:bold;letter-spacing:-0.956px;">Fossa</span>
<span class="t" style="left:565.1px;top:413.40px;font-size:13px;color:#000;font-weight:bold;letter-spacing:-0.502px;">séptica</span>
<span class="t" style="left:571.8px;top:461.40px;font-size:13px;color:#000;font-weight:bold;letter-spacing:-0.433px;">Filtro</span>
<span class="t" style="left:556.1px;top:480.60px;font-size:13px;color:#000;font-weight:bold;letter-spacing:-0.181px;">anaeróbio</span>
<span class="t" style="left:554.3px;top:518.20px;font-size:13px;color:#000;font-weight:bold;letter-spacing:-0.357px;">Sumidouro</span>
<span class="t" style="left:663.2px;top:376.84px;font-size:12px;color:#000;letter-spacing:0.267px;">Vol. útil adotado ≥ Vol. útil necessário</span>
<span class="t" style="left:691.4px;top:395.84px;font-size:12px;color:#000;letter-spacing:0.087px;">Largura interna (W) ≥ 0,80m</span>
<span class="t" style="left:738.8px;top:414.84px;font-size:12px;color:#000;letter-spacing:-0.209px;">2 ≤ L/W ≤ 4</span>
<span class="t" style="left:689.4px;top:433.84px;font-size:12px;color:#000;letter-spacing:0.146px;">1,2m ≤ Altura útil (hu) ≤ 2,2m</span>
<span class="t" style="left:663.2px;top:452.84px;font-size:12px;color:#000;letter-spacing:0.267px;">Vol. útil adotado ≥ Vol. útil necessário</span>
<span class="t" style="left:706.3px;top:471.84px;font-size:12px;color:#000;letter-spacing:0.234px;">Vol. útil adotado ≥ 1m³</span>
<span class="t" style="left:705.5px;top:490.84px;font-size:12px;color:#000;letter-spacing:0.145px;">Altura útil (hu) ≥ 1,20m</span>
<span class="t" style="left:648.4px;top:509.84px;font-size:12px;color:#000;letter-spacing:0.227px;">Área infilt. adotada ≥ Área infilt. necessária</span>
<span class="t" style="left:687.6px;top:528.84px;font-size:12px;color:#000;letter-spacing:0.101px;">Diâmetro interno (Di) ≥ 1,00m</span>
<span class="t" style="left:939.4px;top:376.84px;font-size:12px;color:#000;letter-spacing:-0.972px;">OK</span>
<span class="t" style="left:939.4px;top:395.84px;font-size:12px;color:#000;letter-spacing:-0.972px;">OK</span>
<span class="t" style="left:939.4px;top:414.84px;font-size:12px;color:#000;letter-spacing:-0.972px;">OK</span>
<span class="t" style="left:939.4px;top:433.84px;font-size:12px;color:#000;letter-spacing:-0.972px;">OK</span>
<span class="t" style="left:939.4px;top:452.84px;font-size:12px;color:#000;letter-spacing:-0.972px;">OK</span>
<svg style="left:904px;top:458px;" width="20" height="16"><path d="M17 4.5L4.5 12.5" stroke="#000" stroke-width="1" fill="none"/><path d="M3 13.5L9.5 12.5L6.5 8.5Z" fill="#000"/></svg>
<div style="left:920px;top:462px;width:247px;height:137px;background:#FFFFE1;border:1px solid #000;box-sizing:border-box;"></div>
<span class="t" style="left:923.6px;top:485.84px;font-size:12px;color:#000;font-weight:bold;letter-spacing:-0.118px;">De acordo com o item D.2 da NBR 17076</span>
<span class="t" style="left:923.6px;top:503.04px;font-size:12px;color:#000;font-weight:bold;letter-spacing:-0.055px;">de 2024, "o volume útil mínimo do filtro</span>
<span class="t" style="left:923.6px;top:519.74px;font-size:12px;color:#000;font-weight:bold;letter-spacing:-0.171px;">anaeróbio deve ser de 1000L"</span>
<span class="t" style="left:923.6px;top:553.74px;font-size:12px;color:#000;font-weight:bold;letter-spacing:-0.222px;">1m</span>
<span class="t" style="left:941px;top:550.73px;font-size:8px;color:#000;font-weight:bold;letter-spacing:0.047px;">3</span>
<span class="t" style="left:950px;top:553.74px;font-size:12px;color:#000;font-weight:bold;letter-spacing:-0.048px;">= 1000 litros</span>
<svg style="left:0px;top:205px;" width="1000" height="130">
<defs>
<pattern id="bk" width="4" height="6.4" patternUnits="userSpaceOnUse"><rect width="4" height="6.4" fill="#7a4a2e"/><rect x="0.6" y="1" width="2.6" height="4.6" fill="#b9b4b0"/><rect x="0" y="0" width="4" height="0.9" fill="#a3532a"/></pattern>
<pattern id="dots" width="7" height="14" patternUnits="userSpaceOnUse"><circle cx="1.5" cy="2" r="1.3" fill="#c9c9c9"/><circle cx="5" cy="9" r="1.3" fill="#c9c9c9"/></pattern>
<pattern id="grv" width="3" height="3" patternUnits="userSpaceOnUse"><rect width="3" height="3" fill="#3c3c3c"/><rect x="0" y="0" width="1.4" height="1.4" fill="#cfcfcf"/><rect x="1.8" y="1.8" width="1" height="1" fill="#9a9a9a"/></pattern>
</defs>
<!-- fig 1 -->
<rect x="240.6" y="0" width="11.6" height="32" fill="#3b3431"/><rect x="241.10" y="1.60" width="4.90" height="4.98" fill="#625a55"/><rect x="241.50" y="2.00" width="1.65" height="1.74" fill="#e2e0de"/><rect x="241.50" y="4.44" width="1.65" height="1.74" fill="#e2e0de"/><rect x="243.95" y="2.00" width="1.65" height="1.74" fill="#e2e0de"/><rect x="243.95" y="4.44" width="1.65" height="1.74" fill="#e2e0de"/><rect x="246.70" y="1.60" width="4.90" height="4.98" fill="#625a55"/><rect x="247.10" y="2.00" width="1.65" height="1.74" fill="#e2e0de"/><rect x="247.10" y="4.44" width="1.65" height="1.74" fill="#e2e0de"/><rect x="249.55" y="2.00" width="1.65" height="1.74" fill="#e2e0de"/><rect x="249.55" y="4.44" width="1.65" height="1.74" fill="#e2e0de"/><rect x="241.10" y="7.68" width="4.90" height="4.98" fill="#625a55"/><rect x="241.50" y="8.08" width="1.65" height="1.74" fill="#e2e0de"/><rect x="241.50" y="10.52" width="1.65" height="1.74" fill="#e2e0de"/><rect x="243.95" y="8.08" width="1.65" height="1.74" fill="#e2e0de"/><rect x="243.95" y="10.52" width="1.65" height="1.74" fill="#e2e0de"/><rect x="246.70" y="7.68" width="4.90" height="4.98" fill="#625a55"/><rect x="247.10" y="8.08" width="1.65" height="1.74" fill="#e2e0de"/><rect x="247.10" y="10.52" width="1.65" height="1.74" fill="#e2e0de"/><rect x="249.55" y="8.08" width="1.65" height="1.74" fill="#e2e0de"/><rect x="249.55" y="10.52" width="1.65" height="1.74" fill="#e2e0de"/><rect x="241.10" y="13.76" width="4.90" height="4.98" fill="#625a55"/><rect x="241.50" y="14.16" width="1.65" height="1.74" fill="#e2e0de"/><rect x="241.50" y="16.60" width="1.65" height="1.74" fill="#e2e0de"/><rect x="243.95" y="14.16" width="1.65" height="1.74" fill="#e2e0de"/><rect x="243.95" y="16.60" width="1.65" height="1.74" fill="#e2e0de"/><rect x="246.70" y="13.76" width="4.90" height="4.98" fill="#625a55"/><rect x="247.10" y="14.16" width="1.65" height="1.74" fill="#e2e0de"/><rect x="247.10" y="16.60" width="1.65" height="1.74" fill="#e2e0de"/><rect x="249.55" y="14.16" width="1.65" height="1.74" fill="#e2e0de"/><rect x="249.55" y="16.60" width="1.65" height="1.74" fill="#e2e0de"/><rect x="241.10" y="19.84" width="4.90" height="4.98" fill="#625a55"/><rect x="241.50" y="20.24" width="1.65" height="1.74" fill="#e2e0de"/><rect x="241.50" y="22.68" width="1.65" height="1.74" fill="#e2e0de"/><rect x="243.95" y="20.24" width="1.65" height="1.74" fill="#e2e0de"/><rect x="243.95" y="22.68" width="1.65" height="1.74" fill="#e2e0de"/><rect x="246.70" y="19.84" width="4.90" height="4.98" fill="#625a55"/><rect x="247.10" y="20.24" width="1.65" height="1.74" fill="#e2e0de"/><rect x="247.10" y="22.68" width="1.65" height="1.74" fill="#e2e0de"/><rect x="249.55" y="20.24" width="1.65" height="1.74" fill="#e2e0de"/><rect x="249.55" y="22.68" width="1.65" height="1.74" fill="#e2e0de"/><rect x="241.10" y="25.92" width="4.90" height="4.98" fill="#625a55"/><rect x="241.50" y="26.32" width="1.65" height="1.74" fill="#e2e0de"/><rect x="241.50" y="28.76" width="1.65" height="1.74" fill="#e2e0de"/><rect x="243.95" y="26.32" width="1.65" height="1.74" fill="#e2e0de"/><rect x="243.95" y="28.76" width="1.65" height="1.74" fill="#e2e0de"/><rect x="246.70" y="25.92" width="4.90" height="4.98" fill="#625a55"/><rect x="247.10" y="26.32" width="1.65" height="1.74" fill="#e2e0de"/><rect x="247.10" y="28.76" width="1.65" height="1.74" fill="#e2e0de"/><rect x="249.55" y="26.32" width="1.65" height="1.74" fill="#e2e0de"/><rect x="249.55" y="28.76" width="1.65" height="1.74" fill="#e2e0de"/><rect x="240.6" y="0" width="11.6" height="1.7" fill="#7c3d14"/><rect x="240.6" y="6.58" width="11.6" height="1.3" fill="#8a4518"/><rect x="240.6" y="18.74" width="11.6" height="1.3" fill="#8a4518"/><rect x="240.6" y="0" width="0.6" height="32" fill="#9a5a30"/>
<rect x="401.7" y="0" width="11.6" height="32" fill="#3b3431"/><rect x="402.20" y="1.60" width="4.90" height="4.98" fill="#625a55"/><rect x="402.60" y="2.00" width="1.65" height="1.74" fill="#e2e0de"/><rect x="402.60" y="4.44" width="1.65" height="1.74" fill="#e2e0de"/><rect x="405.05" y="2.00" width="1.65" height="1.74" fill="#e2e0de"/><rect x="405.05" y="4.44" width="1.65" height="1.74" fill="#e2e0de"/><rect x="407.80" y="1.60" width="4.90" height="4.98" fill="#625a55"/><rect x="408.20" y="2.00" width="1.65" height="1.74" fill="#e2e0de"/><rect x="408.20" y="4.44" width="1.65" height="1.74" fill="#e2e0de"/><rect x="410.65" y="2.00" width="1.65" height="1.74" fill="#e2e0de"/><rect x="410.65" y="4.44" width="1.65" height="1.74" fill="#e2e0de"/><rect x="402.20" y="7.68" width="4.90" height="4.98" fill="#625a55"/><rect x="402.60" y="8.08" width="1.65" height="1.74" fill="#e2e0de"/><rect x="402.60" y="10.52" width="1.65" height="1.74" fill="#e2e0de"/><rect x="405.05" y="8.08" width="1.65" height="1.74" fill="#e2e0de"/><rect x="405.05" y="10.52" width="1.65" height="1.74" fill="#e2e0de"/><rect x="407.80" y="7.68" width="4.90" height="4.98" fill="#625a55"/><rect x="408.20" y="8.08" width="1.65" height="1.74" fill="#e2e0de"/><rect x="408.20" y="10.52" width="1.65" height="1.74" fill="#e2e0de"/><rect x="410.65" y="8.08" width="1.65" height="1.74" fill="#e2e0de"/><rect x="410.65" y="10.52" width="1.65" height="1.74" fill="#e2e0de"/><rect x="402.20" y="13.76" width="4.90" height="4.98" fill="#625a55"/><rect x="402.60" y="14.16" width="1.65" height="1.74" fill="#e2e0de"/><rect x="402.60" y="16.60" width="1.65" height="1.74" fill="#e2e0de"/><rect x="405.05" y="14.16" width="1.65" height="1.74" fill="#e2e0de"/><rect x="405.05" y="16.60" width="1.65" height="1.74" fill="#e2e0de"/><rect x="407.80" y="13.76" width="4.90" height="4.98" fill="#625a55"/><rect x="408.20" y="14.16" width="1.65" height="1.74" fill="#e2e0de"/><rect x="408.20" y="16.60" width="1.65" height="1.74" fill="#e2e0de"/><rect x="410.65" y="14.16" width="1.65" height="1.74" fill="#e2e0de"/><rect x="410.65" y="16.60" width="1.65" height="1.74" fill="#e2e0de"/><rect x="402.20" y="19.84" width="4.90" height="4.98" fill="#625a55"/><rect x="402.60" y="20.24" width="1.65" height="1.74" fill="#e2e0de"/><rect x="402.60" y="22.68" width="1.65" height="1.74" fill="#e2e0de"/><rect x="405.05" y="20.24" width="1.65" height="1.74" fill="#e2e0de"/><rect x="405.05" y="22.68" width="1.65" height="1.74" fill="#e2e0de"/><rect x="407.80" y="19.84" width="4.90" height="4.98" fill="#625a55"/><rect x="408.20" y="20.24" width="1.65" height="1.74" fill="#e2e0de"/><rect x="408.20" y="22.68" width="1.65" height="1.74" fill="#e2e0de"/><rect x="410.65" y="20.24" width="1.65" height="1.74" fill="#e2e0de"/><rect x="410.65" y="22.68" width="1.65" height="1.74" fill="#e2e0de"/><rect x="402.20" y="25.92" width="4.90" height="4.98" fill="#625a55"/><rect x="402.60" y="26.32" width="1.65" height="1.74" fill="#e2e0de"/><rect x="402.60" y="28.76" width="1.65" height="1.74" fill="#e2e0de"/><rect x="405.05" y="26.32" width="1.65" height="1.74" fill="#e2e0de"/><rect x="405.05" y="28.76" width="1.65" height="1.74" fill="#e2e0de"/><rect x="407.80" y="25.92" width="4.90" height="4.98" fill="#625a55"/><rect x="408.20" y="26.32" width="1.65" height="1.74" fill="#e2e0de"/><rect x="408.20" y="28.76" width="1.65" height="1.74" fill="#e2e0de"/><rect x="410.65" y="26.32" width="1.65" height="1.74" fill="#e2e0de"/><rect x="410.65" y="28.76" width="1.65" height="1.74" fill="#e2e0de"/><rect x="401.7" y="0" width="11.6" height="1.7" fill="#7c3d14"/><rect x="401.7" y="6.58" width="11.6" height="1.3" fill="#8a4518"/><rect x="401.7" y="18.74" width="11.6" height="1.3" fill="#8a4518"/><rect x="401.7" y="0" width="0.6" height="32" fill="#9a5a30"/>
<path d="M240.6 32H252.2V37.5H401.7V32H413.3V37.5H418.6V44.4H235.3V37.5H240.6Z" fill="#c9c9c9" stroke="#a9a9a9" stroke-width="0.8"/>
<path d="M253 0V37.5M309 0V37" stroke="#9a9a9a" stroke-width="1" fill="none"/>
<path d="M320.7 0V8.5H333V0" stroke="#9a9a9a" stroke-width="1" fill="#fff"/>
<path d="M251.5 52.5H402M252 46.5V55M402 46.5V55M250 54.5L254 50.5M400 54.5L404 50.5" stroke="#666" stroke-width="0.9" fill="none"/>
<!-- fig 2 -->
<path d="M503.4 0V38.3M500 38.3H508M501 36.5L505 40" stroke="#777" stroke-width="0.9" fill="none"/>
<rect x="520.6" y="0" width="113.7" height="7.7" fill="#c8c8c8"/>
<rect x="536" y="2" width="82.7" height="5.7" fill="#fff"/>
<rect x="520.6" y="0" width="113.7" height="2.1" fill="#7a7a7a"/>
<path d="M520.6 4.2H536M520.6 6H536M618.7 4.2H634.3M618.7 6H634.3" stroke="#aaa" stroke-width="0.6"/>
<rect x="536.5" y="3" width="3.2" height="4.4" rx="0.9" fill="#e2e2e2" stroke="#a8a8a8" stroke-width="0.6"/><rect x="540.8" y="3" width="3.2" height="4.4" rx="0.9" fill="#e2e2e2" stroke="#a8a8a8" stroke-width="0.6"/><rect x="545.1" y="3" width="3.2" height="4.4" rx="0.9" fill="#e2e2e2" stroke="#a8a8a8" stroke-width="0.6"/><rect x="549.4" y="3" width="3.2" height="4.4" rx="0.9" fill="#e2e2e2" stroke="#a8a8a8" stroke-width="0.6"/><rect x="564.0" y="3" width="3.2" height="4.4" rx="0.9" fill="#e2e2e2" stroke="#a8a8a8" stroke-width="0.6"/><rect x="568.3" y="3" width="3.2" height="4.4" rx="0.9" fill="#e2e2e2" stroke="#a8a8a8" stroke-width="0.6"/><rect x="572.6" y="3" width="3.2" height="4.4" rx="0.9" fill="#e2e2e2" stroke="#a8a8a8" stroke-width="0.6"/><rect x="576.9" y="3" width="3.2" height="4.4" rx="0.9" fill="#e2e2e2" stroke="#a8a8a8" stroke-width="0.6"/><rect x="581.2" y="3" width="3.2" height="4.4" rx="0.9" fill="#e2e2e2" stroke="#a8a8a8" stroke-width="0.6"/><rect x="585.5" y="3" width="3.2" height="4.4" rx="0.9" fill="#e2e2e2" stroke="#a8a8a8" stroke-width="0.6"/><rect x="603.2" y="3" width="3.2" height="4.4" rx="0.9" fill="#e2e2e2" stroke="#a8a8a8" stroke-width="0.6"/><rect x="607.5" y="3" width="3.2" height="4.4" rx="0.9" fill="#e2e2e2" stroke="#a8a8a8" stroke-width="0.6"/><rect x="611.8" y="3" width="3.2" height="4.4" rx="0.9" fill="#e2e2e2" stroke="#a8a8a8" stroke-width="0.6"/>
<path d="M533.2 8V37.5M622 8V37.5" stroke="#7d7d7d" stroke-width="1"/>
<rect x="520.6" y="7.7" width="12.5" height="24.5" fill="#3b3431"/><rect x="521.10" y="9.30" width="5.35" height="4.62" fill="#625a55"/><rect x="521.50" y="9.70" width="1.88" height="1.56" fill="#e2e0de"/><rect x="521.50" y="11.96" width="1.88" height="1.56" fill="#e2e0de"/><rect x="524.17" y="9.70" width="1.88" height="1.56" fill="#e2e0de"/><rect x="524.17" y="11.96" width="1.88" height="1.56" fill="#e2e0de"/><rect x="527.15" y="9.30" width="5.35" height="4.62" fill="#625a55"/><rect x="527.55" y="9.70" width="1.88" height="1.56" fill="#e2e0de"/><rect x="527.55" y="11.96" width="1.88" height="1.56" fill="#e2e0de"/><rect x="530.22" y="9.70" width="1.88" height="1.56" fill="#e2e0de"/><rect x="530.22" y="11.96" width="1.88" height="1.56" fill="#e2e0de"/><rect x="521.10" y="15.03" width="5.35" height="4.62" fill="#625a55"/><rect x="521.50" y="15.43" width="1.88" height="1.56" fill="#e2e0de"/><rect x="521.50" y="17.69" width="1.88" height="1.56" fill="#e2e0de"/><rect x="524.17" y="15.43" width="1.88" height="1.56" fill="#e2e0de"/><rect x="524.17" y="17.69" width="1.88" height="1.56" fill="#e2e0de"/><rect x="527.15" y="15.03" width="5.35" height="4.62" fill="#625a55"/><rect x="527.55" y="15.43" width="1.88" height="1.56" fill="#e2e0de"/><rect x="527.55" y="17.69" width="1.88" height="1.56" fill="#e2e0de"/><rect x="530.22" y="15.43" width="1.88" height="1.56" fill="#e2e0de"/><rect x="530.22" y="17.69" width="1.88" height="1.56" fill="#e2e0de"/><rect x="521.10" y="20.75" width="5.35" height="4.62" fill="#625a55"/><rect x="521.50" y="21.15" width="1.88" height="1.56" fill="#e2e0de"/><rect x="521.50" y="23.41" width="1.88" height="1.56" fill="#e2e0de"/><rect x="524.17" y="21.15" width="1.88" height="1.56" fill="#e2e0de"/><rect x="524.17" y="23.41" width="1.88" height="1.56" fill="#e2e0de"/><rect x="527.15" y="20.75" width="5.35" height="4.62" fill="#625a55"/><rect x="527.55" y="21.15" width="1.88" height="1.56" fill="#e2e0de"/><rect x="527.55" y="23.41" width="1.88" height="1.56" fill="#e2e0de"/><rect x="530.22" y="21.15" width="1.88" height="1.56" fill="#e2e0de"/><rect x="530.22" y="23.41" width="1.88" height="1.56" fill="#e2e0de"/><rect x="521.10" y="26.47" width="5.35" height="4.62" fill="#625a55"/><rect x="521.50" y="26.87" width="1.88" height="1.56" fill="#e2e0de"/><rect x="521.50" y="29.14" width="1.88" height="1.56" fill="#e2e0de"/><rect x="524.17" y="26.87" width="1.88" height="1.56" fill="#e2e0de"/><rect x="524.17" y="29.14" width="1.88" height="1.56" fill="#e2e0de"/><rect x="527.15" y="26.47" width="5.35" height="4.62" fill="#625a55"/><rect x="527.55" y="26.87" width="1.88" height="1.56" fill="#e2e0de"/><rect x="527.55" y="29.14" width="1.88" height="1.56" fill="#e2e0de"/><rect x="530.22" y="26.87" width="1.88" height="1.56" fill="#e2e0de"/><rect x="530.22" y="29.14" width="1.88" height="1.56" fill="#e2e0de"/><rect x="520.6" y="7.7" width="12.5" height="1.7" fill="#7c3d14"/><rect x="520.6" y="13.93" width="12.5" height="1.3" fill="#8a4518"/><rect x="520.6" y="25.37" width="12.5" height="1.3" fill="#8a4518"/><rect x="520.6" y="7.7" width="0.6" height="24.5" fill="#9a5a30"/>
<rect x="622.5" y="7.7" width="11.8" height="24.5" fill="#3b3431"/><rect x="623.00" y="9.30" width="5.00" height="4.62" fill="#625a55"/><rect x="623.40" y="9.70" width="1.70" height="1.56" fill="#e2e0de"/><rect x="623.40" y="11.96" width="1.70" height="1.56" fill="#e2e0de"/><rect x="625.90" y="9.70" width="1.70" height="1.56" fill="#e2e0de"/><rect x="625.90" y="11.96" width="1.70" height="1.56" fill="#e2e0de"/><rect x="628.70" y="9.30" width="5.00" height="4.62" fill="#625a55"/><rect x="629.10" y="9.70" width="1.70" height="1.56" fill="#e2e0de"/><rect x="629.10" y="11.96" width="1.70" height="1.56" fill="#e2e0de"/><rect x="631.60" y="9.70" width="1.70" height="1.56" fill="#e2e0de"/><rect x="631.60" y="11.96" width="1.70" height="1.56" fill="#e2e0de"/><rect x="623.00" y="15.03" width="5.00" height="4.62" fill="#625a55"/><rect x="623.40" y="15.43" width="1.70" height="1.56" fill="#e2e0de"/><rect x="623.40" y="17.69" width="1.70" height="1.56" fill="#e2e0de"/><rect x="625.90" y="15.43" width="1.70" height="1.56" fill="#e2e0de"/><rect x="625.90" y="17.69" width="1.70" height="1.56" fill="#e2e0de"/><rect x="628.70" y="15.03" width="5.00" height="4.62" fill="#625a55"/><rect x="629.10" y="15.43" width="1.70" height="1.56" fill="#e2e0de"/><rect x="629.10" y="17.69" width="1.70" height="1.56" fill="#e2e0de"/><rect x="631.60" y="15.43" width="1.70" height="1.56" fill="#e2e0de"/><rect x="631.60" y="17.69" width="1.70" height="1.56" fill="#e2e0de"/><rect x="623.00" y="20.75" width="5.00" height="4.62" fill="#625a55"/><rect x="623.40" y="21.15" width="1.70" height="1.56" fill="#e2e0de"/><rect x="623.40" y="23.41" width="1.70" height="1.56" fill="#e2e0de"/><rect x="625.90" y="21.15" width="1.70" height="1.56" fill="#e2e0de"/><rect x="625.90" y="23.41" width="1.70" height="1.56" fill="#e2e0de"/><rect x="628.70" y="20.75" width="5.00" height="4.62" fill="#625a55"/><rect x="629.10" y="21.15" width="1.70" height="1.56" fill="#e2e0de"/><rect x="629.10" y="23.41" width="1.70" height="1.56" fill="#e2e0de"/><rect x="631.60" y="21.15" width="1.70" height="1.56" fill="#e2e0de"/><rect x="631.60" y="23.41" width="1.70" height="1.56" fill="#e2e0de"/><rect x="623.00" y="26.47" width="5.00" height="4.62" fill="#625a55"/><rect x="623.40" y="26.87" width="1.70" height="1.56" fill="#e2e0de"/><rect x="623.40" y="29.14" width="1.70" height="1.56" fill="#e2e0de"/><rect x="625.90" y="26.87" width="1.70" height="1.56" fill="#e2e0de"/><rect x="625.90" y="29.14" width="1.70" height="1.56" fill="#e2e0de"/><rect x="628.70" y="26.47" width="5.00" height="4.62" fill="#625a55"/><rect x="629.10" y="26.87" width="1.70" height="1.56" fill="#e2e0de"/><rect x="629.10" y="29.14" width="1.70" height="1.56" fill="#e2e0de"/><rect x="631.60" y="26.87" width="1.70" height="1.56" fill="#e2e0de"/><rect x="631.60" y="29.14" width="1.70" height="1.56" fill="#e2e0de"/><rect x="622.5" y="7.7" width="11.8" height="1.7" fill="#7c3d14"/><rect x="622.5" y="13.93" width="11.8" height="1.3" fill="#8a4518"/><rect x="622.5" y="25.37" width="11.8" height="1.3" fill="#8a4518"/><rect x="622.5" y="7.7" width="0.6" height="24.5" fill="#9a5a30"/>
<path d="M520.6 32.2H533.1V37.5H622.5V32.2H634.3V37.5H640.6V44.4H514.6V37.5H520.6Z" fill="#c9c9c9" stroke="#a9a9a9" stroke-width="0.8"/>
<path d="M554.1 0V20.3H563.7V0" stroke="#9a9a9a" stroke-width="1" fill="#fff"/>
<path d="M590.3 0V14.5H602.7V0" stroke="#9a9a9a" stroke-width="1" fill="#fff"/>
<path d="M532.3 52.5H622.5M532.8 46.5V55M622 46.5V55M530.8 54.5L534.8 50.5M620 54.5L624 50.5" stroke="#666" stroke-width="0.9" fill="none"/>
<!-- fig 3 -->
<path d="M728.7 0V100M725.5 100H733M726.5 98.5L730.5 102" stroke="#8a8a8a" stroke-width="0.9" fill="none"/>
<rect x="749" y="0" width="58.5" height="83" fill="url(#dots)"/>
<rect x="749" y="82.6" width="58.5" height="17.4" fill="url(#grv)"/>
<g fill="#c9c9c9" stroke="#a5a5a5" stroke-width="0.6"><rect x="737.2" y="0" width="11.8" height="100"/><rect x="807.5" y="0" width="11.9" height="100"/></g>
<rect x="737.5" y="0.3" width="11.3" height="4.9" fill="#e07a35"/><rect x="737.5" y="18.6" width="11.3" height="4.9" fill="#e07a35"/><rect x="737.5" y="24.5" width="11.3" height="4.9" fill="#e07a35"/><rect x="737.5" y="30.3" width="11.3" height="4.9" fill="#e07a35"/><rect x="737.5" y="36.1" width="11.3" height="4.9" fill="#e07a35"/><rect x="737.5" y="42.0" width="11.3" height="4.9" fill="#e07a35"/><rect x="737.5" y="47.9" width="11.3" height="4.9" fill="#e07a35"/><rect x="737.5" y="53.7" width="11.3" height="4.9" fill="#e07a35"/><rect x="737.5" y="59.5" width="11.3" height="4.9" fill="#e07a35"/><rect x="737.5" y="65.4" width="11.3" height="4.9" fill="#e07a35"/><rect x="737.5" y="71.2" width="11.3" height="4.9" fill="#e07a35"/><rect x="737.5" y="77.1" width="11.3" height="4.9" fill="#e07a35"/><rect x="737.5" y="82.9" width="11.3" height="4.9" fill="#e07a35"/><rect x="737.5" y="82.8" width="11.3" height="4.9" fill="#e07a35"/><rect x="807.8" y="0.3" width="11.3" height="4.9" fill="#e07a35"/><rect x="807.8" y="18.6" width="11.3" height="4.9" fill="#e07a35"/><rect x="807.8" y="24.5" width="11.3" height="4.9" fill="#e07a35"/><rect x="807.8" y="30.3" width="11.3" height="4.9" fill="#e07a35"/><rect x="807.8" y="36.1" width="11.3" height="4.9" fill="#e07a35"/><rect x="807.8" y="42.0" width="11.3" height="4.9" fill="#e07a35"/><rect x="807.8" y="47.9" width="11.3" height="4.9" fill="#e07a35"/><rect x="807.8" y="53.7" width="11.3" height="4.9" fill="#e07a35"/><rect x="807.8" y="59.5" width="11.3" height="4.9" fill="#e07a35"/><rect x="807.8" y="65.4" width="11.3" height="4.9" fill="#e07a35"/><rect x="807.8" y="71.2" width="11.3" height="4.9" fill="#e07a35"/><rect x="807.8" y="77.1" width="11.3" height="4.9" fill="#e07a35"/><rect x="807.8" y="82.9" width="11.3" height="4.9" fill="#e07a35"/><rect x="807.8" y="82.8" width="11.3" height="4.9" fill="#e07a35"/>
<path d="M748.2 109H808M748.6 103V111.5M807.6 103V111.5M746.6 111L750.6 107M805.6 111L809.6 107" stroke="#666" stroke-width="0.9" fill="none"/>
</svg>
<span class="t" style="left:322.6px;top:256.07px;font-size:12.5px;color:#222;font-weight:bold;">L</span>
<span class="t" style="left:572.6px;top:256.07px;font-size:12.5px;color:#333;">D</span>
<span class="t" style="left:581.5px;top:259.73px;font-size:8px;color:#333;">i</span>
<span class="t" style="left:773px;top:313.17px;font-size:12.5px;color:#333;">D</span>
<span class="t" style="left:782px;top:316.73px;font-size:8px;color:#333;">i</span>
<span class="t" style="left:713px;top:227.67px;font-size:12.5px;color:#333;">h</span>
<span class="t" style="left:719.5px;top:230.55px;font-size:8.5px;color:#333;">u</span>
<div style="left:486px;top:206px;width:16px;height:8px;overflow:hidden;"><span style="position:absolute;left:1.5px;top:-8px;font-size:12.5px;line-height:20px;color:#333;white-space:pre;">h<span style="font-size:8.5px;position:relative;top:1.5px">u</span></span></div>
<span class="t" style="left:772px;top:273.44px;font-size:4.5px;color:#777;letter-spacing:0.216px;">BRITA</span>
<div style="left:1344px;top:205px;width:1px;height:474px;background:#b4b4b4;"></div>
<div style="left:1345px;top:187px;width:21px;height:518px;background:#fff;"></div>
<div style="left:1348px;top:206px;width:15px;height:458px;background:#f1f1f1;"></div>
<div style="left:1348px;top:191px;width:15px;height:15px;background:#fff;border:1px solid #ababab;box-sizing:border-box;"></div>
<svg style="left:1352px;top:196px;" width="7" height="4"><path d="M0 4H7L3.5 0Z" fill="#555"/></svg>
<div style="left:1348px;top:213px;width:15px;height:30px;background:#fff;border:1px solid #ababab;box-sizing:border-box;"></div>
<div style="left:1348px;top:664px;width:15px;height:15px;background:#fff;border:1px solid #ababab;box-sizing:border-box;"></div>
<svg style="left:1352px;top:670px;" width="7" height="4"><path d="M0 0H7L3.5 4Z" fill="#555"/></svg>
<div style="left:0px;top:678px;width:1345px;height:1px;background:#c6c6c6;"></div>
<div style="left:0px;top:679px;width:1366px;height:26px;background:#f5f5f5;"></div>
<div style="left:0px;top:705px;width:1366px;height:1px;background:#fff;"></div>
<div style="left:101px;top:678px;width:182px;height:24px;background:#fff;"></div>
<div style="left:100px;top:679px;width:1px;height:24px;background:#c6c6c6;"></div>
<div style="left:282px;top:679px;width:1px;height:24px;background:#c6c6c6;"></div>
<div style="left:100px;top:701px;width:183px;height:2px;background:#217346;"></div>
<span class="t" style="left:112.8px;top:681.67px;font-size:12.5px;color:#217346;font-weight:bold;letter-spacing:0.105px;">Fossa, Filtro e Sumidouro</span>
<span class="t" style="left:297.2px;top:681.67px;font-size:12.5px;color:#444;letter-spacing:0.324px;">Memorial de Cálculo</span>
<div style="left:432px;top:682px;width:1px;height:20px;background:#b0b0b0;"></div>
<svg style="left:465px;top:682px;" width="18" height="19"><g transform="translate(0 0.5)"><circle cx="9" cy="9" r="7.6" fill="none" stroke="#666" stroke-width="1.2"/><path d="M9 4.8V13.2M4.8 9H13.2" stroke="#666" stroke-width="1.7"/></g></svg>
<svg style="left:27px;top:688px;" width="5" height="7"><path d="M4.5 0V7L0 3.5Z" fill="#c4c4c4"/></svg>
<svg style="left:56px;top:688px;" width="5" height="7"><path d="M0 0V7L4.5 3.5Z" fill="#c4c4c4"/></svg>
<div style="left:819px;top:687px;width:2px;height:2px;background:#a0a0a0;"></div>
<div style="left:819px;top:691px;width:2px;height:2px;background:#a0a0a0;"></div>
<div style="left:819px;top:695px;width:2px;height:2px;background:#a0a0a0;"></div>
<div style="left:836px;top:685px;width:509px;height:15px;background:#e6e6e6;"></div>
<div style="left:836px;top:685px;width:15px;height:15px;background:#fff;border:1px solid #ababab;box-sizing:border-box;"></div>
<svg style="left:841px;top:689px;" width="4" height="7"><path d="M4 0V7L0 3.5Z" fill="#444"/></svg>
<div style="left:1330px;top:685px;width:15px;height:15px;background:#fff;border:1px solid #ababab;box-sizing:border-box;"></div>
<svg style="left:1336px;top:689px;" width="4" height="7"><path d="M0 0V7L4 3.5Z" fill="#444"/></svg>
<div style="left:872px;top:685px;width:98px;height:15px;background:#fff;border:1px solid #ababab;box-sizing:border-box;"></div>
<div style="left:0px;top:706px;width:1366px;height:22px;background:#217346;"></div>
<span class="t" style="left:7.7px;top:706.84px;font-size:12px;color:#fff;letter-spacing:-0.388px;">Célula K20 comentada por Pedro</span>
<div style="left:1080px;top:706px;width:38px;height:22px;background:#0e6233;"></div>
<svg style="left:1091px;top:710px;" width="15" height="13"><g transform="translate(0.500 0.000) scale(0.9333 0.9286)"><rect x="0.75" y="0.75" width="13.5" height="12.5" fill="none" stroke="#fff" stroke-width="1.5"/><path d="M5.2 0V14M9.8 0V14M0 4.8H15M0 9.2H15" stroke="#fff" stroke-width="1.1"/></g></svg>
<svg style="left:1129px;top:710px;" width="15" height="13"><g transform="translate(0.500 0.000) scale(0.9333 0.9286)"><rect x="0.75" y="0.75" width="13.5" height="12.5" fill="none" stroke="#fff" stroke-width="1.5"/><rect x="4" y="3.8" width="7" height="6.6" fill="none" stroke="#fff" stroke-width="1"/><path d="M5.5 6H9.5M5.5 8H9.5" stroke="#fff" stroke-width="0.9"/></g></svg>
<svg style="left:1167px;top:710px;" width="15" height="13"><g transform="translate(0.500 0.000) scale(0.9333 0.9286)"><rect x="0.75" y="0.75" width="13.5" height="12.5" fill="none" stroke="#fff" stroke-width="1.5"/><rect x="1.5" y="1.5" width="3.6" height="6.5" fill="#fff"/><rect x="6.6" y="1.5" width="3.6" height="6.5" fill="#fff"/></g></svg>
<div style="left:1199px;top:715.5px;width:6px;height:2px;background:#fff;"></div>
<div style="left:1209.5px;top:716px;width:99.5px;height:1px;background:#fff;"></div>
<div style="left:1252.5px;top:710.5px;width:3.5px;height:12px;background:#fff;"></div>
<div style="left:1258.5px;top:713.5px;width:1px;height:6px;background:#fff;"></div>
<div style="left:1313px;top:715.5px;width:8px;height:2px;background:#fff;"></div>
<div style="left:1316px;top:712.5px;width:2px;height:8px;background:#fff;"></div>
<span class="t" style="left:1337.5px;top:706.62px;font-size:11.5px;color:#fff;letter-spacing:-0.910px;">90%</span>
<div style="left:0px;top:728px;width:1366px;height:40px;background:linear-gradient(90deg,#e8dfd3 0%,#e8dfd3 48.5%,#e6dfcb 53.4%,#e6dfcb 100%);"></div>
<div style="left:0px;top:728px;width:48px;height:40px;background:#ece8b4;"></div>
<div style="left:778px;top:728px;width:588px;height:40px;background:linear-gradient(90deg,#dfe1b1 0%,#e2e3ae 18%,#e9e7a6 42%,#ece9a1 70%,#ece9a1 100%);"></div>
<div style="left:730px;top:728px;width:48px;height:40px;background:#eff1dc;"></div>
<div style="left:730px;top:765.5px;width:48px;height:2.5px;background:#0a74d4;"></div>
<div style="left:48px;top:728px;width:287px;height:39px;background:#fff;"></div>
<div style="left:48px;top:766.5px;width:287px;height:1.5px;background:#c9c9c9;"></div>
<div style="left:335px;top:728px;width:1px;height:40px;background:#d0ccc6;"></div>
<svg style="left:15px;top:739px;" width="17" height="17"><g transform="translate(0.8 0.8)"><path d="M0 2.3L6.6 1.4V7.6H0ZM7.5 1.25L16.2 0V7.6H7.5ZM0 8.4H6.6V14.6L0 13.7ZM7.5 8.4H16.2V16L7.5 14.75Z" fill="#000"/></g></svg>
<svg style="left:60px;top:740px;" width="17" height="16"><circle cx="10.6" cy="5.5" r="5.2" fill="none" stroke="#222" stroke-width="1.3"/><path d="M6.9 9.3L0.4 15.6" stroke="#222" stroke-width="1.4"/></svg>
<span class="t" style="left:88.7px;top:738.83px;font-size:15.5px;color:#333;letter-spacing:-0.971px;">Pesquisar</span>
<svg style="left:255px;top:728px;" width="80" height="40">
<defs><radialGradient id="fig" cx="0.3" cy="0.55" r="0.7"><stop offset="0" stop-color="#a784da"/><stop offset="0.5" stop-color="#7b5cab"/><stop offset="1" stop-color="#6a4d96"/></radialGradient>
<linearGradient id="hill" x1="0" y1="0" x2="0" y2="1"><stop offset="0" stop-color="#7ea868"/><stop offset="1" stop-color="#648f4e"/></linearGradient></defs>
<path d="M1 40C8 35 25 32.3 50 32.3C62 32.3 72 32.8 80.3 33.5V40Z" fill="url(#hill)"/>
<path d="M15 16L17 21.5" stroke="#5cb84a" stroke-width="1.5"/>
<path d="M16.5 19.5C17 23 27 27 27 33C27 36.5 23 38 19.5 37.5C15 38 11.5 36 11.8 32C12 27 15.5 24 16.5 19.5Z" fill="url(#fig)"/>
<ellipse cx="33" cy="20.3" rx="3.2" ry="5.6" transform="rotate(-15 33 20.3)" fill="#dda314"/><ellipse cx="41" cy="20.3" rx="3.2" ry="5.6" transform="rotate(15 41 20.3)" fill="#dda314"/>
<ellipse cx="37.5" cy="20.8" rx="3" ry="1.8" fill="#f4600f"/>
<ellipse cx="30.8" cy="24.6" rx="3.3" ry="7" transform="rotate(-36 30.8 24.6)" fill="#f7c827"/><ellipse cx="42.3" cy="24.3" rx="3.2" ry="7" transform="rotate(30 42.3 24.3)" fill="#f4b514"/>
<ellipse cx="36.8" cy="27" rx="3.9" ry="7.3" fill="#f9be13"/>
<path d="M37.6 33.5L38.6 40" stroke="#44a944" stroke-width="2.3"/>
<path d="M37.8 35.6C33 33.8 29 31 27 28C31 29.3 35.3 31.3 38.3 33.6Z" fill="#4cae45"/><path d="M37.3 35.6C40 31.5 42.2 27.3 43.9 24.3C44 29 41.5 33.4 38.9 36Z" fill="#58b94c"/>
<ellipse cx="50.3" cy="13" rx="4.3" ry="8" transform="rotate(-15 50.3 13)" fill="#d9a010"/><ellipse cx="57.3" cy="11.6" rx="4.3" ry="8" transform="rotate(8 57.3 11.6)" fill="#dfa612"/><ellipse cx="63" cy="14.8" rx="3.9" ry="7.2" transform="rotate(32 63 14.8)" fill="#d9a010"/>
<ellipse cx="56.3" cy="13.2" rx="4" ry="2.5" fill="#f4600f"/>
<ellipse cx="47" cy="16.5" rx="4.4" ry="9.6" transform="rotate(-18 47 16.5)" fill="#fab80e"/><ellipse cx="63" cy="20.6" rx="4.4" ry="9.6" transform="rotate(38 63 20.6)" fill="#f9cf2a"/>
<ellipse cx="54" cy="22" rx="5.4" ry="9.8" transform="rotate(3 54 22)" fill="#fac216"/>
<path d="M51.4 30.5L50.6 40" stroke="#44a944" stroke-width="4.2"/>
<path d="M51.5 33.6C46 29 43.5 22.5 42.3 16.8C46 21.5 50.5 26.5 53.6 31Z" fill="#4cae45"/><path d="M50.6 33.8C57 31 62 26.5 67 22.3C63.2 28.5 58 33 52.6 35Z" fill="#58b94c"/>
<polygon points="74.0,32.0 72.3,33.0 73.3,34.7 71.3,34.9 71.5,36.9 69.6,36.0 68.8,37.9 67.6,36.3 66.0,37.5 65.7,35.5 63.7,35.9 64.3,34.0 62.4,33.4 63.8,32.0 62.4,30.6 64.3,30.0 63.7,28.1 65.7,28.5 66.0,26.5 67.6,27.7 68.8,26.1 69.6,28.0 71.5,27.1 71.3,29.1 73.3,29.3 72.3,31.0" fill="#f3aa3a"/><circle cx="68.1" cy="32" r="3" fill="#eb9a2a"/><circle cx="68.1" cy="32" r="1.7" fill="#b06d18"/>
</svg>
<svg style="left:351px;top:739px;" width="18" height="18"><rect x="2.5" y="5.5" width="10" height="7" fill="none" stroke="#111" stroke-width="1.4"/><path d="M1.5 3.4V1.6H13.5V3.4M1.5 14.6V16.4H13.5V14.6M16 1V3.5M16 10V17" fill="none" stroke="#111" stroke-width="1.4"/><rect x="14.8" y="5.3" width="2.6" height="3" fill="#111"/></svg>
<svg style="left:398px;top:736px;" width="26" height="23"><g transform="translate(0.5 0)"><defs><linearGradient id="cp1" x1="0.2" y1="0" x2="0.8" y2="1"><stop offset="0" stop-color="#1f8fe8"/><stop offset="0.35" stop-color="#7b6cf2"/><stop offset="0.7" stop-color="#e85fa8"/><stop offset="1" stop-color="#f5873a"/></linearGradient><linearGradient id="cp2" x1="0.3" y1="0" x2="0.6" y2="1"><stop offset="0" stop-color="#2a9be8"/><stop offset="0.35" stop-color="#36c66a"/><stop offset="0.7" stop-color="#f3d228"/><stop offset="1" stop-color="#f06a3c"/></linearGradient></defs><path d="M10 1.3H16.5C18.8 1.3 20 2.6 20.7 4.6L24.3 14.2C25.3 17 23.8 19.5 21 19.5H16.8C15.5 21.2 14 21.9 12.3 21.9L17 8.5C17.6 6.5 16.8 4.8 15 4.5H6C7 2.5 8.3 1.3 10 1.3Z" fill="url(#cp1)"/><path d="M15.5 21.8H9C6.7 21.8 5.5 20.5 4.8 18.5L1.2 8.9C0.2 6 1.7 3.6 4.5 3.6H8.7C10 1.9 11.5 1.2 13.2 1.2L8.5 14.6C7.9 16.6 8.7 18.3 10.5 18.6H19.5C18.5 20.6 17.2 21.8 15.5 21.8Z" fill="url(#cp2)"/></g></svg>
<svg style="left:447px;top:736px;" width="26" height="24"><g transform="translate(0.5 0)"><defs><linearGradient id="eg1" x1="0" y1="0" x2="1" y2="1"><stop offset="0" stop-color="#35c1b0"/><stop offset="0.6" stop-color="#2b8fd8"/><stop offset="1" stop-color="#1661b8"/></linearGradient></defs><circle cx="12.5" cy="12" r="11.8" fill="url(#eg1)"/><path d="M2 9C5 1 18 -1 23.5 8C25 12 23 15.5 18.5 15.5C14 15.5 13 13.5 14.2 11.5C11.5 9 7.5 10 7 14C5.5 9.5 8 7 11 6.5C6 5.5 3 7 2 9Z" fill="#49d668" opacity="0.85"/><path d="M14.2 11.5C13 13.5 14 15.5 18.5 15.5C21 15.5 23 14.5 24 12.5C23.5 19 18 23.5 12 23.5C8.5 20.5 7.5 15.5 9.5 12.5C11 10.5 13 10.5 14.2 11.5Z" fill="#115ea3" opacity="0.9"/><path d="M14.2 11.5C13.2 13.6 14.2 15.6 18.5 15.6C16 17 12.5 16.2 12 13.6C11.8 12.6 12.6 11.3 14.2 11.5Z" fill="#e7dfd3"/></g></svg>
<svg style="left:497px;top:738px;" width="24" height="19"><g transform="translate(0.5 0.5)"><path d="M0 1.5C0 0.7 0.6 0 1.5 0H8L10 2.5H21.5C22.3 2.5 23 3.2 23 4V6H0Z" fill="#e8a722"/><rect x="0" y="4.3" width="23" height="14" rx="1" fill="#fbd354"/><path d="M5.5 18.3V10.5H17.5V18.3H14V14H9V18.3Z" fill="#3e8fd8"/><rect x="0" y="17" width="23" height="1.4" fill="#e1a62a"/></g></svg>
<svg style="left:546px;top:737px;" width="23" height="22"><g transform="translate(0.5 0)"><rect x="0.3" y="0.3" width="21.9" height="20.9" rx="2.6" fill="#b30b00"/><path d="M5 16.2C7 15 9.2 11.5 10.3 8C10.9 6 10.6 4.3 9.7 4.4C8.7 4.6 9 7 10.6 9.8C12.2 12.5 15 14.6 17 14.2C18.2 13.9 17.6 12.7 15.8 12.7C12.5 12.7 7.5 14.5 5.5 16.6C4.5 17.4 4.3 16.7 5 16.2Z" fill="none" stroke="#fff" stroke-width="1.25"/></g></svg>
<svg style="left:595px;top:737px;" width="24" height="22"><path d="M0 8.6L12 0.2L24 8.6Z" fill="#0f5fbd"/><path d="M2.3 8.6H21.7L12 15.6Z" fill="#f4f4f4"/><path d="M0 8.6L12 15.8L24 8.6V21.7H0Z" fill="#35bdf3"/><path d="M5 21.7L24 10.6V21.7Z" fill="#1f8fe2" opacity="0.75"/><path d="M0 8.6L12 15.8L0 21.7Z" fill="#49c6f7" opacity="0.6"/></svg>
<svg style="left:643px;top:736px;" width="25" height="25"><g transform="translate(0.5 0)"><circle cx="12.25" cy="12.25" r="12" fill="#fff"/><path d="M12.25 12.25L1.86 6.25A12 12 0 0 1 22.64 6.25Z" fill="#e33b2e"/><path d="M12.25 12.25L22.64 6.25A12 12 0 0 1 12.25 24.25Z" fill="#fcc31e"/><path d="M12.25 12.25L12.25 24.25A12 12 0 0 1 1.86 6.25Z" fill="#2ba24c"/><path d="M12.25 6.25H22.64A12 12 0 0 0 1.86 6.25L7.05 15.25Z" fill="#e33b2e"/><path d="M17.45 15.25L22.64 6.25H12.25Z" fill="#fcc31e"/><path d="M17.45 15.25L12.25 24.25A12 12 0 0 0 22.64 6.25Z" fill="#fcc31e"/><path d="M7.05 15.25L1.86 6.25A12 12 0 0 0 12.25 24.25L17.45 15.25Z" fill="#2ba24c"/><circle cx="12.25" cy="12.25" r="5.6" fill="#fff"/><circle cx="12.25" cy="12.25" r="4.5" fill="#3f83ee"/></g></svg>
<svg style="left:693px;top:737px;" width="24" height="22"><g transform="translate(0.5 0)"><rect x="9" y="2" width="13.5" height="17.5" fill="#fff" stroke="#2b579a" stroke-width="1"/><path d="M13 5.5H20.5M13 8.2H20.5M13 10.9H20.5M13 13.6H20.5M13 16.3H20.5" stroke="#2b579a" stroke-width="1.1"/><path d="M0 2.5L13 0V21.5L0 19Z" fill="#2b579a"/><path d="M2.3 7L4 14.8L5.8 8.6H7.1L8.9 14.8L10.6 7" fill="none" stroke="#fff" stroke-width="1.35"/></g></svg>
<svg style="left:742px;top:737px;" width="24" height="22"><rect x="9" y="2" width="13.5" height="17.5" fill="#fff" stroke="#1e7145" stroke-width="1"/><path d="M14 5H21.5M14 8H21.5M14 11H21.5M14 14H21.5M14 17H21.5" stroke="#1e7145" stroke-width="1.5"/><path d="M17.5 2V19.5" stroke="#fff" stroke-width="1"/><path d="M0 2.5L13 0V21.5L0 19Z" fill="#1e7145"/><path d="M3.6 6.8L9.4 15M9.4 6.8L3.6 15" fill="none" stroke="#fff" stroke-width="1.9"/></svg>
<svg style="left:900px;top:735px;" width="25" height="24"><g transform="translate(0 0.5)"><circle cx="12" cy="12" r="9.4" fill="#f59322"/><circle cx="13" cy="13" r="7" fill="#f9a72b"/><path d="M1 8.5C1 6.3 2.8 5 4.6 5.3C5.4 2.8 8.5 2 10.3 3.7C12.6 3.2 14 5 13.6 6.8C15.2 7.2 15.2 9.5 13.4 9.8H3C1.8 9.8 1 9.3 1 8.5Z" fill="#c6d9f1"/><path d="M11 20.5C11 18.6 12.6 17.4 14.3 17.7C15 15.4 18 14.6 19.7 16.2C22 15.8 23.4 17.5 23 19.2C24.6 19.6 24.5 21.9 22.8 22.2H13C11.8 22.2 11 21.5 11 20.5Z" fill="#c9dcf4"/></g></svg>
<span class="t" style="left:932.6px;top:737.50px;font-size:15px;color:#222;letter-spacing:-1.254px;">25°C</span>
<span class="t" style="left:970.7px;top:737.50px;font-size:15px;color:#222;letter-spacing:-0.829px;">Parc ensolarado</span>
<svg style="left:1092px;top:744px;" width="15" height="9"><g transform="translate(0.5 0)"><path d="M1 7.6L7 1.4L13 7.6" fill="none" stroke="#111" stroke-width="1.5"/></g></svg>
<svg style="left:1114px;top:741px;" width="19" height="13"><g transform="translate(0.5 0.5)"><rect x="5" y="3.2" width="11" height="7.6" rx="1" fill="none" stroke="#111" stroke-width="1.2"/><rect x="16.3" y="5.5" width="1.4" height="3" fill="#111"/><path d="M2.3 0.5V3.5M4.8 0.5V3.5M1 3.6H6V6C6 7.4 5 8.4 3.6 8.4C2.1 8.4 1 7.4 1 6ZM3.5 8.5V12" fill="none" stroke="#111" stroke-width="1.1"/></g></svg>
<svg style="left:1141px;top:739px;" width="14" height="18"><g transform="translate(0 0.5)"><rect x="0.8" y="4.5" width="8.5" height="8" rx="1.6" fill="none" stroke="#111" stroke-width="1.2"/><path d="M9.5 7.5L12.7 5.8V11.2L9.5 9.5" fill="none" stroke="#111" stroke-width="1.1"/><path d="M2 2.8C3.6 0.6 7.4 0.6 9 2.8M2 14.2C3.6 16.4 7.4 16.4 9 14.2" fill="none" stroke="#111" stroke-width="1.1"/></g></svg>
<svg style="left:1165px;top:742px;" width="15" height="14"><g transform="translate(0.5 0.5)"><path d="M1 7.2A11 11 0 0 1 12.2 1.4" fill="none" stroke="#111" stroke-width="1.2"/><path d="M3.6 9.3A8 8 0 0 1 12.4 4.6" fill="none" stroke="#111" stroke-width="1.2"/><path d="M6.3 11A5 5 0 0 1 12.5 7.8" fill="none" stroke="#111" stroke-width="1.2"/><circle cx="11.5" cy="11.3" r="1.5" fill="#111"/></g></svg>
<svg style="left:1186px;top:742px;" width="17" height="14"><g transform="translate(0.5 0)"><path d="M0.7 4.6H3.6L7.3 1.2V12.3L3.6 8.9H0.7Z" fill="none" stroke="#111" stroke-width="1.15"/><path d="M9.3 4.5C10.3 5.8 10.3 7.7 9.3 9M11.3 2.8C13.1 5 13.1 8.5 11.3 10.7" fill="none" stroke="#111" stroke-width="1.05"/><path d="M13.4 1.4C15.7 4.3 15.7 9.2 13.4 12.1" fill="none" stroke="#888" stroke-width="0.9"/></g></svg>
<span class="t" style="left:1213.6px;top:730.04px;font-size:12px;color:#222;letter-spacing:-1.272px;">POR</span>
<span class="t" style="left:1213px;top:747.04px;font-size:12px;color:#222;letter-spacing:-1.354px;">PTB2</span>
<span class="t" style="left:1265.4px;top:730.04px;font-size:12px;color:#222;letter-spacing:-0.906px;">14:49</span>
<span class="t" style="left:1250px;top:747.04px;font-size:12px;color:#222;letter-spacing:-0.336px;">10/09/2024</span>
<svg style="left:1324px;top:739px;" width="27" height="25"><g transform="translate(0.5 0.5)"><path d="M0.5 0.5H15.5V12.5H5.5L0.5 16.5Z" fill="#111"/><path d="M3 3.8H13M3 6.5H13M3 9.2H10" stroke="#ece9a2" stroke-width="1.1"/><circle cx="16" cy="15.5" r="7.6" fill="#b9b9b0" stroke="#555" stroke-width="0.9"/></g></svg>
<span class="t" style="left:1337.44px;top:745.49px;font-size:11px;color:#111;">1</span>
<svg style="left:9px;top:2px;" width="18" height="18"><g transform="translate(0.8 0.7)"><rect x="7.5" y="1.8" width="9" height="12.8" fill="#fff" stroke="#1e7145" stroke-width="0.9"/><path d="M10.5 4.3H16M10.5 6.7H16M10.5 9.1H16M10.5 11.5H16" stroke="#1e7145" stroke-width="1.3"/><path d="M13.2 2V14.5" stroke="#fff" stroke-width="0.8"/><path d="M0 1.8L10 0V16.5L0 14.7Z" fill="#1e7145"/><path d="M2.6 5L7.2 11.6M7.2 5L2.6 11.6" fill="none" stroke="#fff" stroke-width="1.6"/></g></svg>
<svg style="left:40px;top:4px;" width="14" height="14"><path d="M0.5 0.5H13.5V13.5H0.5Z" fill="#7e4ea8"/><rect x="2.8" y="1.3" width="8.4" height="5.8" fill="#fff"/><rect x="3.6" y="9.4" width="6.8" height="4.1" fill="#fff"/><rect x="5" y="10.6" width="2.3" height="2.9" fill="#7e4ea8"/></svg>
<svg style="left:69px;top:4px;" width="15" height="14"><path d="M2 4.6H8.6C11.6 4.6 13.4 6.6 13.4 8.8C13.4 11 11.8 12.4 9.4 12.4" fill="none" stroke="#3b73b9" stroke-width="2.1"/><path d="M5.8 0.3L0.6 4.6L5.8 8.9" fill="none" stroke="#3b73b9" stroke-width="2"/></svg>
<svg style="left:89px;top:9px;" width="5" height="4"><g transform="translate(0 0.3)"><path d="M0 0H5L2.5 3Z" fill="#666"/></g></svg>
<svg style="left:108px;top:4px;" width="16" height="14"><g transform="translate(0.5 0)"><path d="M13 4.6H6.4C3.4 4.6 1.6 6.6 1.6 8.8C1.6 11 3.2 12.4 5.6 12.4" fill="none" stroke="#b4b4b4" stroke-width="2.1"/><path d="M9.2 0.3L14.4 4.6L9.2 8.9" fill="none" stroke="#b4b4b4" stroke-width="2"/></g></svg>
<svg style="left:129px;top:9px;" width="5" height="4"><g transform="translate(0 0.3)"><path d="M0 0H5L2.5 3Z" fill="#c8c8c8"/></g></svg>
<svg style="left:147px;top:8px;" width="7" height="8"><g transform="translate(0.5 0.5)"><rect x="0" y="0" width="6" height="1.2" fill="#555"/><path d="M0 3.2H6L3 6.6Z" fill="#555"/></g></svg>
<span class="t" style="left:1231.2px;top:1.50px;font-size:13px;color:#666;font-weight:bold;">?</span>
<svg style="left:1257px;top:6px;" width="13" height="11"><rect x="0.5" y="0.5" width="12" height="9.5" fill="none" stroke="#666" stroke-width="1"/><path d="M0.5 2.6H12.5" stroke="#666"/><path d="M6.5 9V4.4M4.3 6.4L6.5 4.2L8.7 6.4" fill="none" stroke="#666" stroke-width="1"/></svg>
<div style="left:1288px;top:12px;width:9px;height:2px;background:#666;"></div>
<svg style="left:1317px;top:6px;" width="11" height="11"><rect x="0.6" y="3.2" width="6.8" height="6.6" fill="none" stroke="#666" stroke-width="1.2"/><path d="M2.8 3V0.7H9.8V7.3H7.6" fill="none" stroke="#666" stroke-width="1.2"/></svg>
<svg style="left:1346px;top:6px;" width="11" height="11"><path d="M1 1L9.5 9.5M9.5 1L1 9.5" stroke="#555" stroke-width="2"/></svg>
<svg style="left:1191px;top:30px;" width="16" height="14"><g transform="translate(0 0.3)"><path d="M7.75 0.3L15.2 13.2H0.3Z" fill="#ebc47d"/><rect x="7" y="4.5" width="1.6" height="4.6" fill="#444"/><rect x="7" y="10" width="1.6" height="1.6" fill="#444"/></g></svg>
<svg style="left:1332px;top:25px;" width="24" height="24"><rect width="24" height="24" fill="#ababab"/><circle cx="12" cy="9" r="4.8" fill="#fff"/><path d="M3.5 24C3.5 17.5 7 14.5 12 14.5C17 14.5 20.5 17.5 20.5 24Z" fill="#fff"/></svg>
<svg style="left:22px;top:57px;" width="30" height="32"><g transform="translate(0.5 0.5)"><rect x="0.4" y="3.4" width="24.2" height="25" rx="1.4" fill="#ecc57a"/><path d="M4.8 8V3H9C9 1 10.3 0.2 12.5 0.2C14.7 0.2 16 1 16 3H20.2V8Z" fill="#fff"/><path d="M5.6 7.2V4H9.8C9.8 1.8 10.8 0.9 12.5 0.9C14.2 0.9 15.2 1.8 15.2 4H19.4V7.2Z" fill="#787878"/><rect x="11.5" y="2.6" width="2" height="2" fill="#fff"/><path d="M15 12H23.5L28 16.5V30H15Z" fill="#fff" stroke="#7d7d7d" stroke-width="1"/><path d="M23.5 12V16.5H28" fill="none" stroke="#7d7d7d" stroke-width="1"/><rect x="13.4" y="11" width="1" height="20" fill="#fff"/></g></svg>
<svg style="left:59px;top:56px;" width="16" height="16"><g transform="translate(0.5 0)"><path d="M3.4 0.3L9.6 10.2M11.6 0.3L5.4 10.2" stroke="#666" stroke-width="1.9" fill="none"/><circle cx="3.2" cy="12.4" r="2.3" fill="#fff" stroke="#3b73b9" stroke-width="1.1"/><circle cx="11.8" cy="12.4" r="2.3" fill="#fff" stroke="#3b73b9" stroke-width="1.1"/></g></svg>
<svg style="left:58px;top:80px;" width="17" height="14"><g transform="translate(0.5 0)"><path d="M0.5 0.5H5.5L8 3V9.5H0.5Z" fill="#fff" stroke="#666" stroke-width="1"/><path d="M6.5 3.8H12L15.3 7V13.5H6.5Z" fill="#fff" stroke="#666" stroke-width="1"/><path d="M8.3 7.5H11M8.3 9.5H13.5M8.3 11.5H13.5M2 3.5H4.5M2 5.5H5" stroke="#3b73b9" stroke-width="0.9"/></g></svg>
<svg style="left:59px;top:102px;" width="17" height="15"><g transform="translate(0 0.5)"><path d="M9.3 4.2L13.6 0.4L16 3L11.8 6.8Z" fill="#555"/><path d="M6.8 5.6L9 3.8L12.4 7.4L10.4 9.3Z" fill="#777"/><path d="M0.3 8.5L6.4 5.9L10.2 9.8L7 14.2C4.5 13.6 1.5 11.3 0.3 8.5Z" fill="#ecc57a"/></g></svg>
<span class="t" style="left:271.3px;top:62.82px;font-size:13.5px;color:#a9a9a9;">A</span>
<svg style="left:278px;top:65px;" width="6" height="3"><g transform="translate(0.7 0)"><path d="M0 2.6H5L2.5 0Z" fill="#a9a9a9"/></g></svg>
<span class="t" style="left:294.2px;top:63.86px;font-size:10.5px;color:#a9a9a9;">A</span>
<svg style="left:300px;top:65px;" width="6" height="3"><g transform="translate(0.8 0)"><path d="M0 0H5L2.5 2.6Z" fill="#a9a9a9"/></g></svg>
<svg style="left:201px;top:95px;" width="14" height="14"><g transform="translate(0.5 0.8)"><rect x="0.5" y="0.5" width="12.5" height="11" fill="#f3eef3"/><path d="M0.5 0.5H13M0.5 4H13M0.5 7.8H13M0.5 0.5V11.5M4.5 0.5V11.5M8.7 0.5V11.5M13 0.5V11.5" stroke="#cfc4cf" stroke-width="1" stroke-dasharray="1 1"/><path d="M0 12.2H13.5" stroke="#a9a9a9" stroke-width="1.3"/></g></svg>
<svg style="left:244px;top:94px;" width="17" height="17"><g transform="translate(0 0.5)"><rect x="0" y="12.6" width="16" height="3.8" fill="#e6dfe6"/><path d="M7.3 2.4L12.3 7.4L7.6 11.6L2.4 6.7Z" fill="#fff" stroke="#a9a9a9" stroke-width="1.1"/><path d="M7.3 6.5V1.6C7.3 0.2 9.3 0.2 9.3 1.6V4" fill="none" stroke="#a9a9a9" stroke-width="1"/><path d="M12 6.3C13.8 6.8 15 8.5 14.6 11C13.6 9.6 12.6 8.6 11 8Z" fill="#a9a9a9"/></g></svg>
<span class="t" style="left:281.2px;top:92.98px;font-size:14.5px;color:#a9a9a9;font-weight:bold;">A</span>
<svg style="left:322px;top:64px;" width="14" height="9"><rect x="0" y="0" width="14" height="1" fill="#a9a9a9"/><rect x="0" y="3" width="14" height="1" fill="#a9a9a9"/><rect x="0" y="6" width="14" height="1" fill="#a9a9a9"/></svg>
<svg style="left:344px;top:68px;" width="14" height="9"><rect x="0" y="0" width="14" height="1" fill="#a9a9a9"/><rect x="0" y="3" width="14" height="1" fill="#a9a9a9"/><rect x="0" y="6" width="14" height="1" fill="#a9a9a9"/></svg>
<svg style="left:366px;top:73px;" width="14" height="9"><rect x="0" y="0" width="14" height="1" fill="#a9a9a9"/><rect x="0" y="3" width="14" height="1" fill="#a9a9a9"/><rect x="0" y="6" width="14" height="1" fill="#a9a9a9"/></svg>
<svg style="left:322px;top:98px;" width="14" height="12"><rect x="0" y="0" width="14" height="1" fill="#a9a9a9"/><rect x="0" y="3" width="9" height="1" fill="#a9a9a9"/><rect x="0" y="6" width="14" height="1" fill="#a9a9a9"/><rect x="0" y="9" width="9" height="1" fill="#a9a9a9"/></svg>
<svg style="left:344px;top:98px;" width="14" height="12"><rect x="0.0" y="0" width="14" height="1" fill="#a9a9a9"/><rect x="2.0" y="3" width="10" height="1" fill="#a9a9a9"/><rect x="0.0" y="6" width="14" height="1" fill="#a9a9a9"/><rect x="2.0" y="9" width="10" height="1" fill="#a9a9a9"/></svg>
<svg style="left:366px;top:98px;" width="14" height="12"><rect x="0" y="0" width="14" height="1" fill="#a9a9a9"/><rect x="5" y="3" width="9" height="1" fill="#a9a9a9"/><rect x="0" y="6" width="14" height="1" fill="#a9a9a9"/><rect x="5" y="9" width="9" height="1" fill="#a9a9a9"/></svg>
<svg style="left:395px;top:64px;" width="18" height="16"><path d="M7.6 14.4L16.2 5.8M12.4 5.4H16.6V9.6" fill="none" stroke="#a9a9a9" stroke-width="1.1"/><text x="0" y="0" font-size="9.5" font-family="Liberation Sans" fill="#a9a9a9" transform="translate(3.6 10.2) rotate(-45)">ab</text></svg>
<svg style="left:396px;top:98px;" width="17" height="11"><path d="M2.2 0.5H5M6.8 0.5H16M7.4 3.5H16M7.4 6.5H16M2.2 9.5H5M6.8 9.5H16" stroke="#a9a9a9" stroke-width="1"/><path d="M1 5H7M3.8 2L0.8 5L3.8 8" fill="none" stroke="#a9a9a9" stroke-width="1.7"/></svg>
<svg style="left:417px;top:98px;" width="18" height="11"><g transform="translate(0.7 0)"><path d="M2.4 0.5H5.2M7 0.5H16M7.8 3.5H16M7.8 6.5H16M2.4 9.5H5.2M7 9.5H16" stroke="#a9a9a9" stroke-width="1"/><path d="M0.2 5H6.4M3.4 2L6.4 5L3.4 8" fill="none" stroke="#a9a9a9" stroke-width="1.7"/></g></svg>
<svg style="left:449px;top:64px;" width="17" height="15"><rect x="0.5" y="0.5" width="9.5" height="4" fill="#f3eef3" stroke="#a9a9a9" stroke-width="1"/><path d="M10 2.5H13.5" stroke="#a9a9a9"/><rect x="0.5" y="7.5" width="9.5" height="7" fill="#f3eef3" stroke="#a9a9a9" stroke-width="1"/><path d="M2.3 10H8M2.3 12.5H8" stroke="#a9a9a9" stroke-width="0.9"/><path d="M15.4 4.5C15.6 8.5 14 9.7 11 9.7M12.9 7.6L10.8 9.7L12.9 11.8" fill="none" stroke="#a9a9a9" stroke-width="1"/></svg>
<svg style="left:449px;top:95px;" width="15" height="15"><rect x="0.5" y="0.5" width="14" height="14" fill="#f3eef3" stroke="#a9a9a9" stroke-width="1"/><path d="M0.5 3.5H14.5M0.5 11.5H14.5M7.5 0.5V3.5M7.5 11.5V14.5" stroke="#a9a9a9" stroke-width="1"/><path d="M2.5 7.5H12.5M4.3 5.8L2.5 7.5L4.3 9.2M10.7 5.8L12.5 7.5L10.7 9.2" fill="none" stroke="#a9a9a9" stroke-width="0.9"/></svg>
<svg style="left:660px;top:95px;" width="16" height="16"><rect x="0.5" y="0.5" width="15" height="8.5" fill="#c9c9c9" stroke="#a9a9a9" stroke-width="0.8"/><circle cx="8" cy="4.8" r="2.6" fill="#eee"/><ellipse cx="11" cy="8.5" rx="4" ry="1.5" fill="#e3e3e3" stroke="#bdbdbd" stroke-width="0.6"/><ellipse cx="8.5" cy="11" rx="4" ry="1.5" fill="#e3e3e3" stroke="#bdbdbd" stroke-width="0.6"/><ellipse cx="8" cy="13.8" rx="4" ry="1.5" fill="#e3e3e3" stroke="#bdbdbd" stroke-width="0.6"/></svg>
<span class="t" style="left:753px;top:89.55px;font-size:8.5px;color:#a9a9a9;">,0</span>
<span class="t" style="left:748.5px;top:96.55px;font-size:8.5px;color:#a9a9a9;">,00</span>
<svg style="left:747px;top:96px;" width="7" height="6"><g transform="translate(0 0.5)"><path d="M0.5 2.7H7M2.8 0.4L0.5 2.7L2.8 5" fill="none" stroke="#a9a9a9" stroke-width="1"/></g></svg>
<span class="t" style="left:772px;top:89.55px;font-size:8.5px;color:#a9a9a9;">,00</span>
<span class="t" style="left:776.5px;top:96.55px;font-size:8.5px;color:#a9a9a9;">,0</span>
<svg style="left:769px;top:103px;" width="8" height="6"><g transform="translate(0 0.5)"><path d="M0 2.7H6.6M4.3 0.4L6.6 2.7L4.3 5" fill="none" stroke="#a9a9a9" stroke-width="1"/></g></svg>
<svg style="left:820px;top:58px;" width="31" height="30"><g transform="translate(0.8 0)"><rect x="0.5" y="0.5" width="26" height="23" fill="#f3eef3" stroke="#c2b8c2"/><path d="M7 0.5V23.5M13.5 0.5V23.5M20 0.5V23.5M0.5 6.2H26.5M0.5 12H26.5M0.5 17.8H26.5" stroke="#c2b8c2"/><rect x="7" y="1" width="6" height="5" fill="#b3b3b3"/><rect x="7" y="6.5" width="11" height="5" fill="#b3b3b3"/><rect x="7" y="12.3" width="8" height="5" fill="#b3b3b3"/><rect x="7" y="18" width="4.5" height="5" fill="#b3b3b3"/><rect x="14.5" y="17.5" width="15" height="11.5" fill="#f3eef3" stroke="#a9a9a9" stroke-width="1"/><path d="M18 21.8H26M18 24.8H26M24 19.6L20 27" stroke="#777" stroke-width="1" fill="none"/></g></svg>
<svg style="left:904px;top:60px;" width="31" height="29"><g transform="translate(0.2 0.3)"><rect x="0.5" y="0.5" width="24" height="19.5" fill="#f3eef3" stroke="#c2b8c2"/><rect x="6.5" y="5.4" width="18" height="14.6" fill="#d9d3d9"/><path d="M6.5 0.5V20M12.5 0.5V20M18.5 0.5V20M0.5 5.4H24.5M0.5 10.3H24.5M0.5 15.2H24.5" stroke="#c2b8c2"/><path d="M28.7 5.3V12.6L22.2 18.1L19.4 15.3Z" fill="#b2b2b2" stroke="#fff" stroke-width="0.8" paint-order="stroke"/><path d="M18.6 16.1L21.4 18.9C22.3 23.5 17 27.2 6.3 26.9C10.5 25.4 12 23 13 20.5C14 17.8 16.3 16.3 18.6 16.1Z" fill="#b2b2b2"/><ellipse cx="16.3" cy="21.6" rx="2.6" ry="1.9" transform="rotate(-38 16.3 21.6)" fill="#e6e1e6"/></g></svg>
<svg style="left:975px;top:58px;" width="30" height="28"><rect x="0.5" y="0.5" width="25" height="20.5" fill="#f3eef3" stroke="#c2b8c2"/><path d="M5.5 0.5V21M20 0.5V21M0.5 4.8H25.5M0.5 15.3H25.5" stroke="#c2b8c2"/><rect x="6" y="5.3" width="13.5" height="9.5" fill="#cfcfcf"/><path d="M28.7 5.3V12.6L22.2 18.1L19.4 15.3Z" fill="#b2b2b2" stroke="#fff" stroke-width="0.8" paint-order="stroke"/><path d="M18.6 16.1L21.4 18.9C22.3 23.5 17 27.2 6.3 26.9C10.5 25.4 12 23 13 20.5C14 17.8 16.3 16.3 18.6 16.1Z" fill="#b2b2b2"/><ellipse cx="16.3" cy="21.6" rx="2.6" ry="1.9" transform="rotate(-38 16.3 21.6)" fill="#e6e1e6"/></svg>
<svg style="left:1032px;top:58px;" width="27" height="27"><rect x="0.5" y="0.5" width="14" height="5" fill="#f3eef3" stroke="#a9a9a9"/><path d="M7.5 0.5V5.5" stroke="#a9a9a9"/><rect x="11.5" y="8.5" width="14" height="5" fill="#d6d6d6" stroke="#a9a9a9"/><path d="M18.5 8.5V13.5" stroke="#a9a9a9"/><path d="M1.5 11H7.8M4.2 8.2L1.4 11L4.2 13.8" fill="none" stroke="#a9a9a9" stroke-width="1.5"/><rect x="0.5" y="16.5" width="14" height="10" fill="#f3eef3" stroke="#a9a9a9"/><path d="M7.5 16.5V26.5M0.5 21.5H14.5" stroke="#a9a9a9"/></svg>
<svg style="left:1073px;top:58px;" width="30" height="28"><rect x="0.5" y="0.5" width="14" height="5" fill="#f3eef3" stroke="#a9a9a9"/><path d="M7.5 0.5V5.5" stroke="#a9a9a9"/><rect x="6.5" y="8.5" width="9" height="5" fill="#d6d6d6" stroke="#a9a9a9"/><rect x="0.5" y="17.5" width="14" height="10" fill="#f3eef3" stroke="#a9a9a9"/><path d="M7.5 17.5V27.5M0.5 22.5H14.5" stroke="#a9a9a9"/><path d="M15.5 6.3L29 18.3M29 6.5L15 18.2" stroke="#b0b0b0" stroke-width="2" fill="none"/></svg>
<svg style="left:1120px;top:56px;" width="28" height="32"><g transform="translate(0 0.5)"><path d="M0.5 0.5V5.5M22.5 0.5V5.5" stroke="#3b73b9" stroke-width="1"/><path d="M2.5 3H20.5M5.2 0.6L2.6 3L5.2 5.4M17.8 0.6L20.4 3L17.8 5.4" fill="none" stroke="#3b73b9" stroke-width="1.1"/><rect x="0.5" y="7" width="27" height="20" fill="#fff" stroke="#7f7f7f"/><path d="M7.5 7V27M15.5 7V27M22.5 7V27M0.5 12H27.5M0.5 22H27.5" stroke="#a6a6a6"/><rect x="8" y="12.5" width="7" height="9" fill="#3b73b9"/><path d="M0.5 27V31H7L8.5 29H9.5V31H16.5L18.5 27" fill="#fff" stroke="#7f7f7f"/></g></svg>
<svg style="left:1173px;top:55px;" width="16" height="17"><g transform="translate(0 0.8)"><path d="M14.6 3.6V1H1.2L8.4 7.7L1.2 14.4H14.6V11.8" fill="none" stroke="#a6a6a6" stroke-width="2"/></g></svg>
<svg style="left:1173px;top:79px;" width="15" height="16"><g transform="translate(0.5 0)"><rect x="0.5" y="0.5" width="13" height="15" fill="#fff" stroke="#777"/><rect x="0.5" y="0.5" width="13" height="3" fill="#777"/><path d="M7 5.5V12.6M3.8 9.6L7 12.8L10.2 9.6" fill="none" stroke="#2f6fba" stroke-width="1.7"/></g></svg>
<svg style="left:1174px;top:103px;" width="15" height="13"><path d="M8.6 0.4L13.6 4L7.2 10.8L2.2 7.2Z" fill="#e5869b"/><path d="M2.2 7.2L7.2 10.8L5.6 12.4L0.6 8.8Z" fill="#f6c9d2"/><path d="M5 12.5H14.5" stroke="#666" stroke-width="1"/></svg>
<span class="t" style="left:1219.3px;top:55.33px;font-size:15.5px;color:#a9a9a9;">A</span>
<span class="t" style="left:1220px;top:69.40px;font-size:15px;color:#a9a9a9;">Z</span>
<svg style="left:1231px;top:65px;" width="18" height="17"><g transform="translate(0 0.8)"><path d="M0.2 0.3H17L10.2 7.3V14.9H7V7.3Z" fill="#a9a9a9"/><path d="M2.6 1.5L7.9 7V14" stroke="#d8d8d8" stroke-width="0.8" fill="none"/></g></svg>
<svg style="left:1282px;top:60px;" width="27" height="23"><g transform="translate(0.5 0)"><path d="M6 0H10.2V2.5H11.2V8H12V22.7H0.5V14H1.8V10.5H3.2V6.5H4.6V2.5H6Z" fill="#5c5c5c"/><g transform="translate(26.5 0) scale(-1 1)"><path d="M6 0H10.2V2.5H11.2V8H12V22.7H0.5V14H1.8V10.5H3.2V6.5H4.6V2.5H6Z" fill="#5c5c5c"/></g><rect x="11.5" y="9.4" width="3.5" height="2.6" fill="#5c5c5c"/><path d="M1.9 14.8V21.8M24.6 14.8V21.8M7.6 1V2.2M18.9 1V2.2" stroke="#e9e9e9" stroke-width="0.9"/></g></svg>
</div></body></html>
